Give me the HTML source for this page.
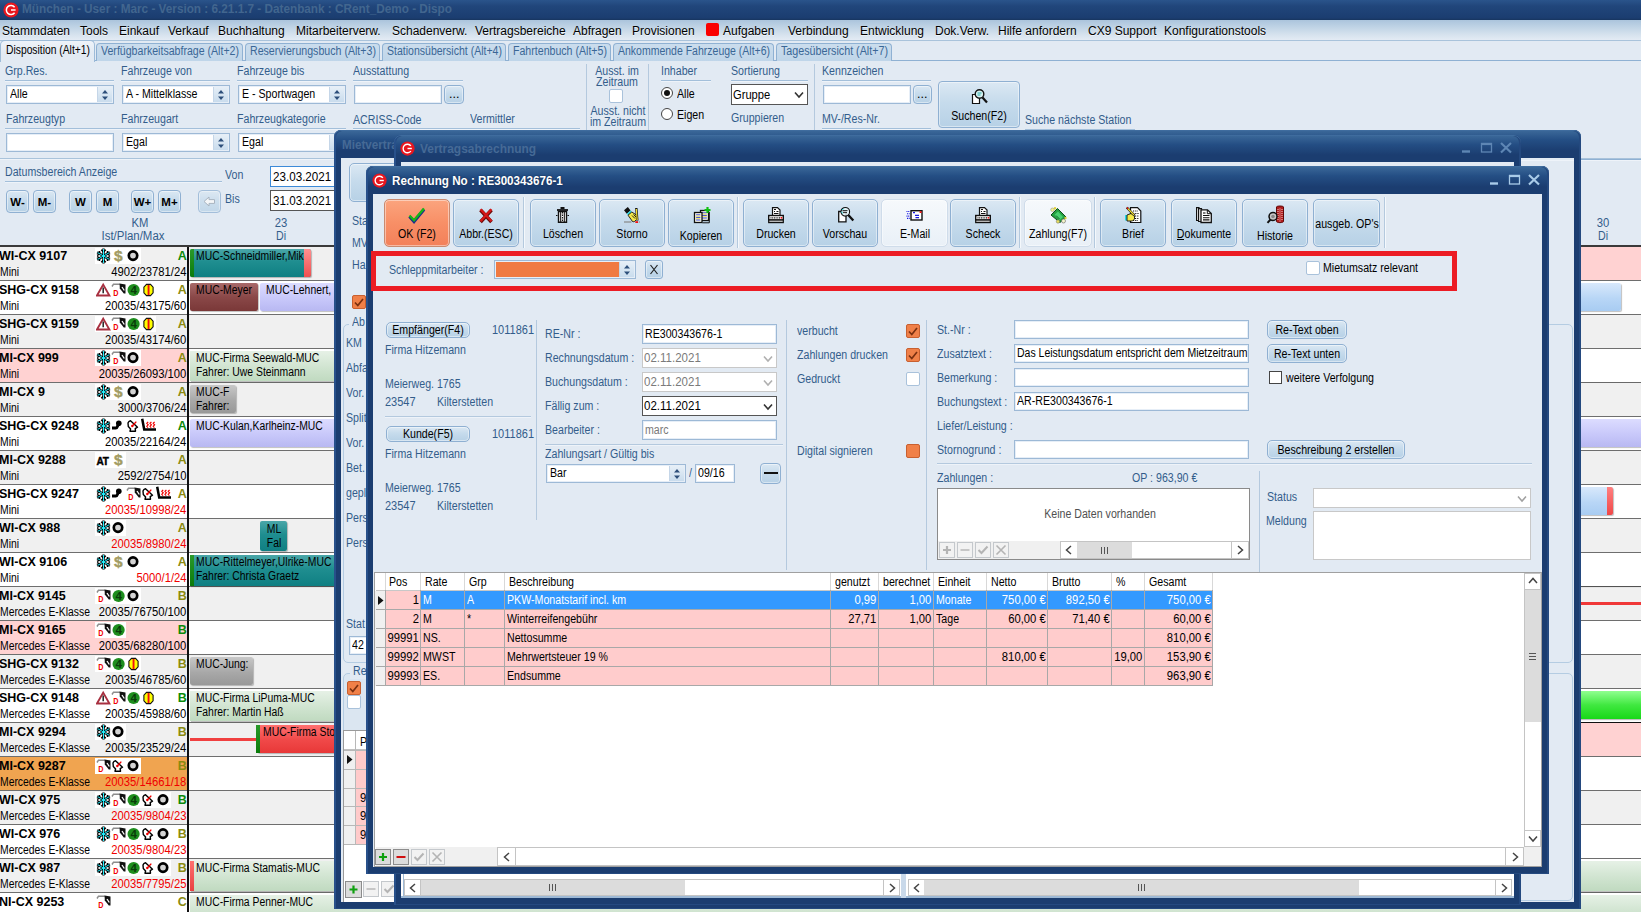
<!DOCTYPE html><html lang="de"><head><meta charset="utf-8"><title>CRent Dispo</title><style>
html,body{margin:0;padding:0}
body{width:1641px;height:912px;overflow:hidden;position:relative;background:#e2eaf3;font:12.5px/14px "Liberation Sans",sans-serif;color:#000}
.a{position:absolute;box-sizing:border-box}
.t{position:absolute;white-space:pre;transform-origin:0 50%;transform:scaleX(.85);line-height:14px;font-size:12.5px}
.t.r{transform-origin:100% 50%;text-align:right}
.t.c{transform-origin:50% 50%;text-align:center;width:300px}
.lb{color:#335d8b}
.b{font-weight:bold;transform:scaleX(1)}
.m{font-size:12px;transform:scaleX(1)}
.red{color:#f00000}
.gy{color:#7a7a7a}
.ln{position:absolute;height:1px;background:#a3bfda;box-shadow:0 1px 0 #eef3f9}
.vl{position:absolute;width:1px;background:#b4c9de}
.inp{position:absolute;box-sizing:border-box;background:#fff;border:1px solid #9db9d6;box-shadow:inset 0 0 0 1px #e6eef7}
.btn{position:absolute;box-sizing:border-box;border:1px solid #8fb0d2;border-radius:4px;background:linear-gradient(#dbe8f3,#c6dbec 45%,#b7d1e6);box-shadow:inset 0 0 0 1px rgba(255,255,255,.45)}
.sp{position:absolute;box-sizing:border-box;background:linear-gradient(#e6eff7,#c9dced);border-left:1px solid #c5d6e8}
.cb{position:absolute;box-sizing:border-box;width:14px;height:14px;background:#fff;border:1px solid #a9c2db;border-radius:2px}
.cbo{position:absolute;box-sizing:border-box;width:14px;height:14px;background:#f08048;border:1px solid #c86030;border-radius:2px}
svg{position:absolute;overflow:visible}
</style></head><body>
<svg width="0" height="0" style="left:0;top:0"><defs>
<symbol id="logo" viewBox="0 0 16 16"><circle cx="8" cy="8" r="7.6" fill="#e8161e"/><path d="M11.6 5.2A4.6 4.6 0 1 0 11.6 10.8" fill="none" stroke="#fff" stroke-width="1.5"/><path d="M8 8H12.6" stroke="#fff" stroke-width="1.5"/></symbol>
<symbol id="spin" viewBox="0 0 8 12"><path d="M1 4.5 4 1 7 4.5ZM1 7.5 4 11 7 7.5Z" fill="#2d4f7a"/></symbol>
<symbol id="snow" viewBox="0 0 15 16"><g stroke="#000" stroke-linecap="butt" fill="none"><path d="M7.500 0.500V15.500M1.200 4.300 13.800 11.700M1.200 11.700 13.800 4.300" stroke-width="2.400"/><path d="M5.200 1.800 7.500 4 9.800 1.800M5.200 14.200 7.500 12 9.800 14.200M1 7.400 3.900 6.100 3.400 3M14 8.600 11.100 9.900 11.600 13M1 8.600 3.900 9.900 3.400 13M14 7.400 11.100 6.100 11.600 3" stroke-width="1.500"/></g><g stroke="#20f0ff" stroke-width="1" fill="none"><path d="M7.500 1V15M1.600 4.600 13.400 11.400M1.600 11.400 13.400 4.600"/></g></symbol>
<symbol id="dollar" viewBox="0 0 15 16"><text x="7.300" y="13" text-anchor="middle" font-family="Liberation Sans" font-weight="bold" font-size="15.500" fill="#a39c62" stroke="#a39c62" stroke-width=".400">$</text></symbol>
<symbol id="tire" viewBox="0 0 15 16"><circle cx="7" cy="7.600" r="4.200" fill="#d4d4d4" stroke="#000" stroke-width="2.700"/></symbol>
<symbol id="warn" viewBox="0 0 15 16"><path d="M7.200 2.600 13.400 13.500H1Z" fill="#fff" stroke="#a83040" stroke-width="1.900" stroke-linejoin="miter"/><path d="M7.200 5.500V11.200" stroke="#222" stroke-width="1.500"/></symbol>
<symbol id="pump" viewBox="0 0 15 16"><path d="M1 4.500 2.500 2.200H9" fill="none" stroke="#8c8c8c" stroke-width="1.500"/><path d="M8.600 1.600 14.500 2.500V11.500H12.800L8.800 6.500Z" fill="#111"/><path d="M11 5 13.300 8.500" stroke="#fff" stroke-width="1.300"/><text x="2.200" y="14.300" font-family="Liberation Sans" font-weight="bold" font-size="8.500" fill="#f00000" transform="translate(.4 0) scale(.85 1)">D</text></symbol>
<symbol id="g4" viewBox="0 0 15 16"><circle cx="7.600" cy="8" r="6.100" fill="#1e8e1e"/><text x="7.600" y="12.200" text-anchor="middle" font-family="Liberation Sans" font-weight="bold" font-size="11.500" fill="#0a3c0a">4</text></symbol>
<symbol id="yr" viewBox="0 0 15 16"><path d="M5.500 2.400H9.500L12.100 5.200V10.800L9.500 13.600H5.500L2.900 10.800V5.200Z" fill="#ffff00" stroke="#111" stroke-width="1.100"/><rect x="6.600" y="2.900" width="1.900" height="10.200" fill="#f01010"/></symbol>
<symbol id="hook" viewBox="0 0 15 16"><path d="M1 10H4.800C6.800 10 6.300 7 7.800 6" fill="none" stroke="#000" stroke-width="3"/><circle cx="7.800" cy="5.300" r="2.800" fill="#000"/></symbol>
<symbol id="nav" viewBox="0 0 15 16"><path d="M2 5C2.500 3.500 3.500 3 4.500 2.800L11.500 9.200 9.200 10.600 9.500 13.200H4L4.600 11 2.300 8.500Z" fill="#fff" stroke="#000" stroke-width="1.400" stroke-linejoin="round"/><path d="M6.300 8 10.300 3.600" stroke="#f00000" stroke-width="1.400"/><circle cx="6.300" cy="8" r="1.200" fill="#f00000"/></symbol>
<symbol id="seat" viewBox="0 0 15 16"><path d="M1.200 0.800 3.200 11.400H15.200" fill="none" stroke="#000" stroke-width="2.500"/><path d="M7.200 3.800 5.800 5.300 7.200 6.800 5.800 8.300 7 9.700M10.400 3.800 9 5.300 10.400 6.800 9 8.300 10.200 9.700M13.600 3.800 12.200 5.300 13.600 6.800 12.200 8.300 13.400 9.700" fill="none" stroke="#f00000" stroke-width="1.200"/></symbol>
<symbol id="at" viewBox="0 0 15 16"><text x="6.700" y="13.300" text-anchor="middle" font-family="Liberation Sans" font-weight="bold" font-size="10" fill="#000" stroke="#000" stroke-width=".400">AT</text></symbol>
</defs></svg>
<div class="a" style="left:0px;top:0px;width:1641px;height:20px;background:linear-gradient(#2a548b,#21467b 30%,#1b3d70 90%,#17355f)"></div>
<svg style="left:2.5px;top:1.5px" width="16" height="16"><use href="#logo"/></svg>
<span class="t b" style="left:22px;top:2px;transform:scaleX(0.98);font-size:12px;color:#42668f">München - User : Marc - Version : 6.21.1.7 - Datenbank : CRent_Demo - Dispo</span>
<div class="a" style="left:0px;top:20px;width:1641px;height:21px;background:linear-gradient(#abc4dc,#bfd3e5 35%,#d4e1ed 70%,#e3ebf4);border-bottom:1px solid #a9c3db"></div>
<span class="t m" style="left:2px;top:23.5px;text-shadow:0 1px 0 rgba(255,255,255,.6)">Stammdaten</span>
<span class="t m" style="left:80px;top:23.5px;text-shadow:0 1px 0 rgba(255,255,255,.6)">Tools</span>
<span class="t m" style="left:119px;top:23.5px;text-shadow:0 1px 0 rgba(255,255,255,.6)">Einkauf</span>
<span class="t m" style="left:168px;top:23.5px;text-shadow:0 1px 0 rgba(255,255,255,.6)">Verkauf</span>
<span class="t m" style="left:218px;top:23.5px;text-shadow:0 1px 0 rgba(255,255,255,.6)">Buchhaltung</span>
<span class="t m" style="left:296px;top:23.5px;text-shadow:0 1px 0 rgba(255,255,255,.6)">Mitarbeiterverw.</span>
<span class="t m" style="left:392px;top:23.5px;text-shadow:0 1px 0 rgba(255,255,255,.6)">Schadenverw.</span>
<span class="t m" style="left:475px;top:23.5px;text-shadow:0 1px 0 rgba(255,255,255,.6)">Vertragsbereiche</span>
<span class="t m" style="left:573px;top:23.5px;text-shadow:0 1px 0 rgba(255,255,255,.6)">Abfragen</span>
<span class="t m" style="left:632px;top:23.5px;text-shadow:0 1px 0 rgba(255,255,255,.6)">Provisionen</span>
<span class="t m" style="left:723px;top:23.5px;text-shadow:0 1px 0 rgba(255,255,255,.6)">Aufgaben</span>
<span class="t m" style="left:788px;top:23.5px;text-shadow:0 1px 0 rgba(255,255,255,.6)">Verbindung</span>
<span class="t m" style="left:860px;top:23.5px;text-shadow:0 1px 0 rgba(255,255,255,.6)">Entwicklung</span>
<span class="t m" style="left:935px;top:23.5px;text-shadow:0 1px 0 rgba(255,255,255,.6)">Dok.Verw.</span>
<span class="t m" style="left:998px;top:23.5px;text-shadow:0 1px 0 rgba(255,255,255,.6)">Hilfe anfordern</span>
<span class="t m" style="left:1088px;top:23.5px;text-shadow:0 1px 0 rgba(255,255,255,.6)">CX9 Support</span>
<span class="t m" style="left:1164px;top:23.5px;text-shadow:0 1px 0 rgba(255,255,255,.6)">Konfigurationstools</span>
<div class="a" style="left:706px;top:23px;width:13px;height:13px;background:#fa0000;border-radius:2px"></div>
<div class="a" style="left:0px;top:41px;width:1641px;height:20px;background:#e2eaf3;border-bottom:1px solid #8fb1d3"></div>
<div class="a" style="left:96px;top:42.5px;width:147px;height:18.5px;background:linear-gradient(#cbdded,#bfd5e9);border:1px solid #8fb1d3;border-bottom:none;border-radius:4px 4px 0 0"></div>
<span class="t " style="left:101px;top:43.7px;transform:scaleX(0.847);color:#3a6796">Verfügbarkeitsabfrage (Alt+2)</span>
<div class="a" style="left:245px;top:42.5px;width:135px;height:18.5px;background:linear-gradient(#cbdded,#bfd5e9);border:1px solid #8fb1d3;border-bottom:none;border-radius:4px 4px 0 0"></div>
<span class="t " style="left:250px;top:43.7px;transform:scaleX(0.849);color:#3a6796">Reservierungsbuch (Alt+3)</span>
<div class="a" style="left:382px;top:42.5px;width:124px;height:18.5px;background:linear-gradient(#cbdded,#bfd5e9);border:1px solid #8fb1d3;border-bottom:none;border-radius:4px 4px 0 0"></div>
<span class="t " style="left:387px;top:43.7px;transform:scaleX(0.842);color:#3a6796">Stationsübersicht (Alt+4)</span>
<div class="a" style="left:508px;top:42.5px;width:103px;height:18.5px;background:linear-gradient(#cbdded,#bfd5e9);border:1px solid #8fb1d3;border-bottom:none;border-radius:4px 4px 0 0"></div>
<span class="t " style="left:513px;top:43.7px;transform:scaleX(0.848);color:#3a6796">Fahrtenbuch (Alt+5)</span>
<div class="a" style="left:613px;top:42.5px;width:161px;height:18.5px;background:linear-gradient(#cbdded,#bfd5e9);border:1px solid #8fb1d3;border-bottom:none;border-radius:4px 4px 0 0"></div>
<span class="t " style="left:618px;top:43.7px;transform:scaleX(0.84);color:#3a6796">Ankommende Fahrzeuge (Alt+6)</span>
<div class="a" style="left:776px;top:42.5px;width:116px;height:18.5px;background:linear-gradient(#cbdded,#bfd5e9);border:1px solid #8fb1d3;border-bottom:none;border-radius:4px 4px 0 0"></div>
<span class="t " style="left:781px;top:43.7px;transform:scaleX(0.858);color:#3a6796">Tagesübersicht (Alt+7)</span>
<div class="a" style="left:0px;top:40px;width:95px;height:22px;background:linear-gradient(#eef3f9,#e2eaf3 60%);border:1px solid #9dbbd8;border-bottom:none;border-radius:5px 5px 0 0"></div>
<span class="t " style="left:5.5px;top:42.5px;transform:scaleX(0.825);">Disposition (Alt+1)</span>
<span class="t lb" style="left:5px;top:64px;">Grp.Res.</span>
<div class="ln" style="left:5px;top:80px;width:109px;"></div>
<span class="t lb" style="left:121px;top:64px;">Fahrzeuge von</span>
<div class="ln" style="left:121px;top:80px;width:109px;"></div>
<span class="t lb" style="left:237px;top:64px;">Fahrzeuge bis</span>
<div class="ln" style="left:237px;top:80px;width:109px;"></div>
<span class="t lb" style="left:353px;top:64px;">Ausstattung</span>
<div class="ln" style="left:353px;top:80px;width:110px;"></div>
<div class="inp" style="left:6px;top:85px;width:108px;height:19px;"></div>
<div class="sp" style="left:97px;top:87px;width:15px;height:15px"></div>
<svg style="left:101px;top:88.5px" width="8" height="12"><use href="#spin"/></svg>
<span class="t " style="left:10px;top:86.9px;">Alle</span>
<div class="inp" style="left:122px;top:85px;width:108px;height:19px;"></div>
<div class="sp" style="left:213px;top:87px;width:15px;height:15px"></div>
<svg style="left:217px;top:88.5px" width="8" height="12"><use href="#spin"/></svg>
<span class="t " style="left:126px;top:86.9px;">A - Mittelklasse</span>
<div class="inp" style="left:238px;top:85px;width:108px;height:19px;"></div>
<div class="sp" style="left:329px;top:87px;width:15px;height:15px"></div>
<svg style="left:333px;top:88.5px" width="8" height="12"><use href="#spin"/></svg>
<span class="t " style="left:242px;top:86.9px;">E - Sportwagen</span>
<div class="inp" style="left:354px;top:85px;width:88px;height:19px;"></div>
<div class="btn" style="left:444px;top:85px;width:20px;height:19px;"></div>
<span class="t " style="left:449px;top:87px;transform:scaleX(1);">...</span>
<span class="t lb" style="left:6px;top:112px;">Fahrzeugtyp</span>
<span class="t lb" style="left:121px;top:112px;">Fahrzeugart</span>
<span class="t lb" style="left:237px;top:112px;">Fahrzeugkategorie</span>
<span class="t lb" style="left:353px;top:113px;">ACRISS-Code</span>
<span class="t lb" style="left:470px;top:112px;">Vermittler</span>
<div class="ln" style="left:5px;top:128px;width:341px;"></div>
<div class="ln" style="left:353px;top:128px;width:227px;"></div>
<div class="inp" style="left:6px;top:133px;width:108px;height:19px;"></div>
<div class="inp" style="left:122px;top:133px;width:108px;height:19px;"></div>
<div class="sp" style="left:213px;top:135px;width:15px;height:15px"></div>
<svg style="left:217px;top:136.5px" width="8" height="12"><use href="#spin"/></svg>
<span class="t " style="left:126px;top:134.9px;">Egal</span>
<div class="inp" style="left:238px;top:133px;width:108px;height:19px;"></div>
<div class="sp" style="left:329px;top:135px;width:15px;height:15px"></div>
<svg style="left:333px;top:136.5px" width="8" height="12"><use href="#spin"/></svg>
<span class="t " style="left:242px;top:134.9px;">Egal</span>
<div class="vl" style="left:586px;top:64px;height:66px;"></div>
<div class="vl" style="left:648px;top:64px;height:66px;"></div>
<div class="vl" style="left:814px;top:64px;height:66px;"></div>
<span class="t c lb" style="left:467px;top:64px;">Ausst. im</span>
<span class="t c lb" style="left:467px;top:75px;">Zeitraum</span>
<div class="cb" style="left:609px;top:89px"></div>
<span class="t c lb" style="left:468px;top:104px;">Ausst. nicht</span>
<span class="t c lb" style="left:468px;top:115px;">im Zeitraum</span>
<span class="t lb" style="left:661px;top:64px;">Inhaber</span>
<div class="ln" style="left:661px;top:80px;width:50px;"></div>
<div class="a" style="left:661px;top:87px;width:12px;height:12px;border-radius:50%;border:1px solid #444;background:#fff"></div><div class="a" style="left:664px;top:90px;width:6px;height:6px;border-radius:50%;background:#111"></div>
<span class="t " style="left:677px;top:86.5px;">Alle</span>
<div class="a" style="left:661px;top:108px;width:12px;height:12px;border-radius:50%;border:1px solid #444;background:#fff"></div>
<span class="t " style="left:677px;top:107.5px;">Eigen</span>
<span class="t lb" style="left:731px;top:64px;">Sortierung</span>
<div class="ln" style="left:731px;top:80px;width:77px;"></div>
<div class="a" style="left:731px;top:84px;width:77px;height:21px;background:#fff;border:1px solid #555"></div>
<span class="t m" style="left:733px;top:87.5px;transform:scaleX(0.93);">Gruppe</span>
<svg style="left:794px;top:91px" width="10" height="8"><path d="M1 1.5 5 6 9 1.5" fill="none" stroke="#333" stroke-width="1.6"/></svg>
<span class="t lb" style="left:731px;top:111px;">Gruppieren</span>
<span class="t lb" style="left:822px;top:64px;">Kennzeichen</span>
<div class="ln" style="left:822px;top:80px;width:109px;"></div>
<div class="inp" style="left:823px;top:85px;width:88px;height:19px;"></div>
<div class="btn" style="left:913px;top:85px;width:19px;height:19px;"></div>
<span class="t " style="left:917px;top:87px;transform:scaleX(1);">...</span>
<span class="t lb" style="left:822px;top:112px;">MV-/Res-Nr.</span>
<div class="ln" style="left:822px;top:128px;width:109px;"></div>
<div class="btn" style="left:938px;top:81px;width:82px;height:47px;"></div>
<svg style="left:971px;top:88px" width="18" height="17" viewBox="0 0 18 17"><path d="M1.5 6.5H8.5V15.5H1.5Z" fill="#fff" stroke="#111" stroke-width="1.2"/><circle cx="8.5" cy="6" r="4.3" fill="#d8f0f0" stroke="#111" stroke-width="1.4"/><path d="M6.5 5H10.5M6.5 7H9.5" stroke="#2aa" stroke-width="1"/><path d="M11.5 9.5 16 14.5" stroke="#111" stroke-width="2.2"/></svg>
<span class="t c " style="left:829px;top:108.5px;">Suchen(F2)</span>
<span class="t lb" style="left:1025px;top:113px;">Suche nächste Station</span>
<div class="ln" style="left:1025px;top:129px;width:110px;"></div>
<div class="ln" style="left:0px;top:158px;width:1641px;background:#a9c3db"></div>
<span class="t lb" style="left:5px;top:165px;">Datumsbereich Anzeige</span>
<div class="ln" style="left:5px;top:181px;width:217px;"></div>
<span class="t lb" style="left:225px;top:168px;">Von</span>
<span class="t lb" style="left:225px;top:192px;">Bis</span>
<div class="a" style="left:270px;top:166px;width:70px;height:21px;background:#fff;border:1px solid #3c8ad8"></div>
<span class="t m" style="left:273px;top:169.5px;transform:scaleX(0.97);">23.03.2021</span>
<div class="a" style="left:270px;top:190px;width:70px;height:21px;background:#fff;border:1px solid #555"></div>
<span class="t m" style="left:273px;top:193.5px;transform:scaleX(0.97);">31.03.2021</span>
<div class="btn" style="left:6px;top:190px;width:23px;height:23px;"></div>
<span class="t c b" style="left:-132.5px;top:194.5px;font-size:11.5px">W-</span>
<div class="btn" style="left:33px;top:190px;width:23px;height:23px;"></div>
<span class="t c b" style="left:-105.5px;top:194.5px;font-size:11.5px">M-</span>
<div class="btn" style="left:69px;top:190px;width:23px;height:23px;"></div>
<span class="t c b" style="left:-69.5px;top:194.5px;font-size:11.5px">W</span>
<div class="btn" style="left:96px;top:190px;width:23px;height:23px;"></div>
<span class="t c b" style="left:-42.5px;top:194.5px;font-size:11.5px">M</span>
<div class="btn" style="left:131px;top:190px;width:23px;height:23px;"></div>
<span class="t c b" style="left:-7.5px;top:194.5px;font-size:11.5px">W+</span>
<div class="btn" style="left:158px;top:190px;width:23px;height:23px;"></div>
<span class="t c b" style="left:19.5px;top:194.5px;font-size:11.5px">M+</span>
<div class="btn" style="left:198px;top:190px;width:23px;height:23px;opacity:.75"></div>
<svg style="left:203px;top:196px" width="13" height="11" viewBox="0 0 13 11"><path d="M1 5.5 6 1V3.6H11.5V7.4H6V10Z" fill="#f4f6f8" stroke="#a8b4c0" stroke-width="1"/></svg>
<span class="t c lb" style="left:-10.5px;top:216.3px;transform:scaleX(0.9);">KM</span>
<span class="t c lb" style="left:-17.5px;top:229.2px;transform:scaleX(0.916);">Ist/Plan/Max</span>
<span class="t c lb" style="left:131px;top:216.3px;transform:scaleX(0.9);">23</span>
<span class="t c lb" style="left:131px;top:229.2px;">Di</span>
<span class="t c lb" style="left:1453px;top:216.3px;transform:scaleX(0.9);">30</span>
<span class="t c lb" style="left:1453px;top:229.2px;">Di</span>
<div class="ln" style="left:1581px;top:159px;width:60px;background:#8fb1d3"></div>
<div class="a" style="left:0px;top:245px;width:1641px;height:2px;background:#3a3a3a"></div>
<div class="a" style="left:0px;top:247px;width:187px;height:33px;background:#f0f0f0"></div>
<div class="a" style="left:189px;top:247px;width:1452px;height:33px;background:#f0f0f0"></div>
<div class="a" style="left:0px;top:280px;width:1641px;height:1px;background:#6e6e6e"></div>
<span class="t b" style="left:-1px;top:248.5px;">WI-CX 9107</span>
<span class="t " style="left:0px;top:265px;transform:scaleX(0.83);">Mini</span>
<div class="a" style="left:95px;top:248px;width:46px;height:16px;background:#fff"></div>
<svg style="left:95.5px;top:248px" width="15" height="16"><use href="#snow"/></svg>
<svg style="left:110.5px;top:248px" width="15" height="16"><use href="#dollar"/></svg>
<svg style="left:125.5px;top:248px" width="15" height="16"><use href="#tire"/></svg>
<span class="t r b r" style="right:1454.3px;top:248.5px;color:#0a8a0a">A</span>
<span class="t r r" style="right:1454.7px;top:265px;transform:scaleX(0.9);">4902/23781/24</span>
<div class="a" style="left:0px;top:281px;width:187px;height:33px;background:#fff"></div>
<div class="a" style="left:189px;top:281px;width:1452px;height:33px;background:#fff"></div>
<div class="a" style="left:0px;top:314px;width:1641px;height:1px;background:#6e6e6e"></div>
<span class="t b" style="left:-1px;top:282.5px;">SHG-CX 9158</span>
<span class="t " style="left:0px;top:299px;transform:scaleX(0.83);">Mini</span>
<div class="a" style="left:95px;top:282px;width:61px;height:16px;background:#fff"></div>
<svg style="left:95.5px;top:282px" width="15" height="16"><use href="#warn"/></svg>
<svg style="left:110.5px;top:282px" width="15" height="16"><use href="#pump"/></svg>
<svg style="left:125.5px;top:282px" width="15" height="16"><use href="#g4"/></svg>
<svg style="left:140.5px;top:282px" width="15" height="16"><use href="#yr"/></svg>
<span class="t r b r" style="right:1454.3px;top:282.5px;color:#8a8a10">A</span>
<span class="t r r" style="right:1454.7px;top:299px;transform:scaleX(0.9);">20035/43175/60</span>
<div class="a" style="left:0px;top:315px;width:187px;height:33px;background:#f0f0f0"></div>
<div class="a" style="left:189px;top:315px;width:1452px;height:33px;background:#f0f0f0"></div>
<div class="a" style="left:0px;top:348px;width:1641px;height:1px;background:#6e6e6e"></div>
<span class="t b" style="left:-1px;top:316.5px;">SHG-CX 9159</span>
<span class="t " style="left:0px;top:333px;transform:scaleX(0.83);">Mini</span>
<div class="a" style="left:95px;top:316px;width:61px;height:16px;background:#fff"></div>
<svg style="left:95.5px;top:316px" width="15" height="16"><use href="#warn"/></svg>
<svg style="left:110.5px;top:316px" width="15" height="16"><use href="#pump"/></svg>
<svg style="left:125.5px;top:316px" width="15" height="16"><use href="#g4"/></svg>
<svg style="left:140.5px;top:316px" width="15" height="16"><use href="#yr"/></svg>
<span class="t r b r" style="right:1454.3px;top:316.5px;color:#8a8a10">A</span>
<span class="t r r" style="right:1454.7px;top:333px;transform:scaleX(0.9);">20035/43174/60</span>
<div class="a" style="left:0px;top:349px;width:187px;height:33px;background:#ffd2d2"></div>
<div class="a" style="left:189px;top:349px;width:1452px;height:33px;background:#fff"></div>
<div class="a" style="left:0px;top:382px;width:1641px;height:1px;background:#6e6e6e"></div>
<span class="t b" style="left:-1px;top:350.5px;">MI-CX 999</span>
<span class="t " style="left:0px;top:367px;transform:scaleX(0.83);">Mini</span>
<div class="a" style="left:95px;top:350px;width:46px;height:16px;background:#fff"></div>
<svg style="left:95.5px;top:350px" width="15" height="16"><use href="#snow"/></svg>
<svg style="left:110.5px;top:350px" width="15" height="16"><use href="#pump"/></svg>
<svg style="left:125.5px;top:350px" width="15" height="16"><use href="#tire"/></svg>
<span class="t r b r" style="right:1454.3px;top:350.5px;color:#8a8a10">A</span>
<span class="t r r" style="right:1454.7px;top:367px;transform:scaleX(0.9);">20035/26093/100</span>
<div class="a" style="left:0px;top:383px;width:187px;height:33px;background:#f0f0f0"></div>
<div class="a" style="left:189px;top:383px;width:1452px;height:33px;background:#f0f0f0"></div>
<div class="a" style="left:0px;top:416px;width:1641px;height:1px;background:#6e6e6e"></div>
<span class="t b" style="left:-1px;top:384.5px;">MI-CX 9</span>
<span class="t " style="left:0px;top:401px;transform:scaleX(0.83);">Mini</span>
<div class="a" style="left:95px;top:384px;width:46px;height:16px;background:#fff"></div>
<svg style="left:95.5px;top:384px" width="15" height="16"><use href="#snow"/></svg>
<svg style="left:110.5px;top:384px" width="15" height="16"><use href="#dollar"/></svg>
<svg style="left:125.5px;top:384px" width="15" height="16"><use href="#tire"/></svg>
<span class="t r b r" style="right:1454.3px;top:384.5px;color:#8a8a10">A</span>
<span class="t r r" style="right:1454.7px;top:401px;transform:scaleX(0.9);">3000/3706/24</span>
<div class="a" style="left:0px;top:417px;width:187px;height:33px;background:#fff"></div>
<div class="a" style="left:189px;top:417px;width:1452px;height:33px;background:#fff"></div>
<div class="a" style="left:0px;top:450px;width:1641px;height:1px;background:#6e6e6e"></div>
<span class="t b" style="left:-1px;top:418.5px;">SHG-CX 9248</span>
<span class="t " style="left:0px;top:435px;transform:scaleX(0.83);">Mini</span>
<div class="a" style="left:95px;top:418px;width:61px;height:16px;background:#fff"></div>
<svg style="left:95.5px;top:418px" width="15" height="16"><use href="#snow"/></svg>
<svg style="left:110.5px;top:418px" width="15" height="16"><use href="#hook"/></svg>
<svg style="left:125.5px;top:418px" width="15" height="16"><use href="#nav"/></svg>
<svg style="left:140.5px;top:418px" width="15" height="16"><use href="#seat"/></svg>
<span class="t r b r" style="right:1454.3px;top:418.5px;color:#0a8a0a">A</span>
<span class="t r r" style="right:1454.7px;top:435px;transform:scaleX(0.9);">20035/22164/24</span>
<div class="a" style="left:0px;top:451px;width:187px;height:33px;background:#f0f0f0"></div>
<div class="a" style="left:189px;top:451px;width:1452px;height:33px;background:#f0f0f0"></div>
<div class="a" style="left:0px;top:484px;width:1641px;height:1px;background:#6e6e6e"></div>
<span class="t b" style="left:-1px;top:452.5px;">MI-CX 9288</span>
<span class="t " style="left:0px;top:469px;transform:scaleX(0.83);">Mini</span>
<div class="a" style="left:95px;top:452px;width:31px;height:16px;background:#fff"></div>
<svg style="left:95.5px;top:452px" width="15" height="16"><use href="#at"/></svg>
<svg style="left:110.5px;top:452px" width="15" height="16"><use href="#dollar"/></svg>
<span class="t r b r" style="right:1454.3px;top:452.5px;color:#8a8a10">A</span>
<span class="t r r" style="right:1454.7px;top:469px;transform:scaleX(0.9);">2592/2754/10</span>
<div class="a" style="left:0px;top:485px;width:187px;height:33px;background:#fff"></div>
<div class="a" style="left:189px;top:485px;width:1452px;height:33px;background:#fff"></div>
<div class="a" style="left:0px;top:518px;width:1641px;height:1px;background:#6e6e6e"></div>
<span class="t b" style="left:-1px;top:486.5px;">SHG-CX 9247</span>
<span class="t " style="left:0px;top:503px;transform:scaleX(0.83);">Mini</span>
<div class="a" style="left:95px;top:486px;width:76px;height:16px;background:#fff"></div>
<svg style="left:95.5px;top:486px" width="15" height="16"><use href="#snow"/></svg>
<svg style="left:110.5px;top:486px" width="15" height="16"><use href="#hook"/></svg>
<svg style="left:125.5px;top:486px" width="15" height="16"><use href="#pump"/></svg>
<svg style="left:140.5px;top:486px" width="15" height="16"><use href="#nav"/></svg>
<svg style="left:155.5px;top:486px" width="15" height="16"><use href="#seat"/></svg>
<span class="t r b r" style="right:1454.3px;top:486.5px;color:#8a8a10">A</span>
<span class="t r r red" style="right:1454.7px;top:503px;transform:scaleX(0.9);">20035/10998/24</span>
<div class="a" style="left:0px;top:519px;width:187px;height:33px;background:#f0f0f0"></div>
<div class="a" style="left:189px;top:519px;width:1452px;height:33px;background:#f0f0f0"></div>
<div class="a" style="left:0px;top:552px;width:1641px;height:1px;background:#6e6e6e"></div>
<span class="t b" style="left:-1px;top:520.5px;">WI-CX 988</span>
<span class="t " style="left:0px;top:537px;transform:scaleX(0.83);">Mini</span>
<div class="a" style="left:95px;top:520px;width:31px;height:16px;background:#fff"></div>
<svg style="left:95.5px;top:520px" width="15" height="16"><use href="#snow"/></svg>
<svg style="left:110.5px;top:520px" width="15" height="16"><use href="#tire"/></svg>
<span class="t r b r" style="right:1454.3px;top:520.5px;color:#8a8a10">A</span>
<span class="t r r red" style="right:1454.7px;top:537px;transform:scaleX(0.9);">20035/8980/24</span>
<div class="a" style="left:0px;top:553px;width:187px;height:33px;background:#fff"></div>
<div class="a" style="left:189px;top:553px;width:1452px;height:33px;background:#fff"></div>
<div class="a" style="left:0px;top:586px;width:1641px;height:1px;background:#6e6e6e"></div>
<span class="t b" style="left:-1px;top:554.5px;">WI-CX 9106</span>
<span class="t " style="left:0px;top:571px;transform:scaleX(0.83);">Mini</span>
<div class="a" style="left:95px;top:554px;width:46px;height:16px;background:#fff"></div>
<svg style="left:95.5px;top:554px" width="15" height="16"><use href="#snow"/></svg>
<svg style="left:110.5px;top:554px" width="15" height="16"><use href="#dollar"/></svg>
<svg style="left:125.5px;top:554px" width="15" height="16"><use href="#tire"/></svg>
<span class="t r b r" style="right:1454.3px;top:554.5px;color:#8a8a10">A</span>
<span class="t r r red" style="right:1454.7px;top:571px;transform:scaleX(0.9);">5000/1/24</span>
<div class="a" style="left:0px;top:587px;width:187px;height:33px;background:#f0f0f0"></div>
<div class="a" style="left:189px;top:587px;width:1452px;height:33px;background:#f0f0f0"></div>
<div class="a" style="left:0px;top:620px;width:1641px;height:1px;background:#6e6e6e"></div>
<span class="t b" style="left:-1px;top:588.5px;">MI-CX 9145</span>
<span class="t " style="left:0px;top:605px;transform:scaleX(0.83);">Mercedes E-Klasse</span>
<div class="a" style="left:95px;top:588px;width:46px;height:16px;background:#fff"></div>
<svg style="left:95.5px;top:588px" width="15" height="16"><use href="#pump"/></svg>
<svg style="left:110.5px;top:588px" width="15" height="16"><use href="#g4"/></svg>
<svg style="left:125.5px;top:588px" width="15" height="16"><use href="#tire"/></svg>
<span class="t r b r" style="right:1454.3px;top:588.5px;color:#8a8a10">B</span>
<span class="t r r" style="right:1454.7px;top:605px;transform:scaleX(0.9);">20035/76750/100</span>
<div class="a" style="left:0px;top:621px;width:187px;height:33px;background:#ffd2d2"></div>
<div class="a" style="left:189px;top:621px;width:1452px;height:33px;background:#fff"></div>
<div class="a" style="left:0px;top:654px;width:1641px;height:1px;background:#6e6e6e"></div>
<span class="t b" style="left:-1px;top:622.5px;">MI-CX 9165</span>
<span class="t " style="left:0px;top:639px;transform:scaleX(0.83);">Mercedes E-Klasse</span>
<div class="a" style="left:95px;top:622px;width:31px;height:16px;background:#fff"></div>
<svg style="left:95.5px;top:622px" width="15" height="16"><use href="#pump"/></svg>
<svg style="left:110.5px;top:622px" width="15" height="16"><use href="#g4"/></svg>
<span class="t r b r" style="right:1454.3px;top:622.5px;color:#0a8a0a">B</span>
<span class="t r r" style="right:1454.7px;top:639px;transform:scaleX(0.9);">20035/68280/100</span>
<div class="a" style="left:0px;top:655px;width:187px;height:33px;background:#f0f0f0"></div>
<div class="a" style="left:189px;top:655px;width:1452px;height:33px;background:#f0f0f0"></div>
<div class="a" style="left:0px;top:688px;width:1641px;height:1px;background:#6e6e6e"></div>
<span class="t b" style="left:-1px;top:656.5px;">SHG-CX 9132</span>
<span class="t " style="left:0px;top:673px;transform:scaleX(0.83);">Mercedes E-Klasse</span>
<div class="a" style="left:95px;top:656px;width:46px;height:16px;background:#fff"></div>
<svg style="left:95.5px;top:656px" width="15" height="16"><use href="#pump"/></svg>
<svg style="left:110.5px;top:656px" width="15" height="16"><use href="#g4"/></svg>
<svg style="left:125.5px;top:656px" width="15" height="16"><use href="#yr"/></svg>
<span class="t r b r" style="right:1454.3px;top:656.5px;color:#8a8a10">B</span>
<span class="t r r" style="right:1454.7px;top:673px;transform:scaleX(0.9);">20035/46785/60</span>
<div class="a" style="left:0px;top:689px;width:187px;height:33px;background:#fff"></div>
<div class="a" style="left:189px;top:689px;width:1452px;height:33px;background:#fff"></div>
<div class="a" style="left:0px;top:722px;width:1641px;height:1px;background:#6e6e6e"></div>
<span class="t b" style="left:-1px;top:690.5px;">SHG-CX 9148</span>
<span class="t " style="left:0px;top:707px;transform:scaleX(0.83);">Mercedes E-Klasse</span>
<div class="a" style="left:95px;top:690px;width:61px;height:16px;background:#fff"></div>
<svg style="left:95.5px;top:690px" width="15" height="16"><use href="#warn"/></svg>
<svg style="left:110.5px;top:690px" width="15" height="16"><use href="#pump"/></svg>
<svg style="left:125.5px;top:690px" width="15" height="16"><use href="#g4"/></svg>
<svg style="left:140.5px;top:690px" width="15" height="16"><use href="#yr"/></svg>
<span class="t r b r" style="right:1454.3px;top:690.5px;color:#0a8a0a">B</span>
<span class="t r r" style="right:1454.7px;top:707px;transform:scaleX(0.9);">20035/45988/60</span>
<div class="a" style="left:0px;top:723px;width:187px;height:33px;background:#f0f0f0"></div>
<div class="a" style="left:189px;top:723px;width:1452px;height:33px;background:#f0f0f0"></div>
<div class="a" style="left:0px;top:756px;width:1641px;height:1px;background:#6e6e6e"></div>
<span class="t b" style="left:-1px;top:724.5px;">MI-CX 9294</span>
<span class="t " style="left:0px;top:741px;transform:scaleX(0.83);">Mercedes E-Klasse</span>
<div class="a" style="left:95px;top:724px;width:31px;height:16px;background:#fff"></div>
<svg style="left:95.5px;top:724px" width="15" height="16"><use href="#snow"/></svg>
<svg style="left:110.5px;top:724px" width="15" height="16"><use href="#tire"/></svg>
<span class="t r b r" style="right:1454.3px;top:724.5px;color:#8a8a10">B</span>
<span class="t r r" style="right:1454.7px;top:741px;transform:scaleX(0.9);">20035/23529/24</span>
<div class="a" style="left:0px;top:757px;width:187px;height:33px;background:#f0a450"></div>
<div class="a" style="left:189px;top:757px;width:1452px;height:33px;background:#fff"></div>
<div class="a" style="left:0px;top:790px;width:1641px;height:1px;background:#6e6e6e"></div>
<span class="t b" style="left:-1px;top:758.5px;">MI-CX 9287</span>
<span class="t " style="left:0px;top:775px;transform:scaleX(0.83);">Mercedes E-Klasse</span>
<div class="a" style="left:95px;top:758px;width:46px;height:16px;background:#fff"></div>
<svg style="left:95.5px;top:758px" width="15" height="16"><use href="#pump"/></svg>
<svg style="left:110.5px;top:758px" width="15" height="16"><use href="#nav"/></svg>
<svg style="left:125.5px;top:758px" width="15" height="16"><use href="#tire"/></svg>
<span class="t r b r" style="right:1454.3px;top:758.5px;color:#8a8a10">B</span>
<span class="t r r red" style="right:1454.7px;top:775px;transform:scaleX(0.9);">20035/14661/18</span>
<div class="a" style="left:0px;top:791px;width:187px;height:33px;background:#f0f0f0"></div>
<div class="a" style="left:189px;top:791px;width:1452px;height:33px;background:#f0f0f0"></div>
<div class="a" style="left:0px;top:824px;width:1641px;height:1px;background:#6e6e6e"></div>
<span class="t b" style="left:-1px;top:792.5px;">WI-CX 975</span>
<span class="t " style="left:0px;top:809px;transform:scaleX(0.83);">Mercedes E-Klasse</span>
<div class="a" style="left:95px;top:792px;width:76px;height:16px;background:#fff"></div>
<svg style="left:95.5px;top:792px" width="15" height="16"><use href="#snow"/></svg>
<svg style="left:110.5px;top:792px" width="15" height="16"><use href="#pump"/></svg>
<svg style="left:125.5px;top:792px" width="15" height="16"><use href="#g4"/></svg>
<svg style="left:140.5px;top:792px" width="15" height="16"><use href="#nav"/></svg>
<svg style="left:155.5px;top:792px" width="15" height="16"><use href="#tire"/></svg>
<span class="t r b r" style="right:1454.3px;top:792.5px;color:#0a8a0a">B</span>
<span class="t r r red" style="right:1454.7px;top:809px;transform:scaleX(0.9);">20035/9804/23</span>
<div class="a" style="left:0px;top:825px;width:187px;height:33px;background:#fff"></div>
<div class="a" style="left:189px;top:825px;width:1452px;height:33px;background:#fff"></div>
<div class="a" style="left:0px;top:858px;width:1641px;height:1px;background:#6e6e6e"></div>
<span class="t b" style="left:-1px;top:826.5px;">WI-CX 976</span>
<span class="t " style="left:0px;top:843px;transform:scaleX(0.83);">Mercedes E-Klasse</span>
<div class="a" style="left:95px;top:826px;width:76px;height:16px;background:#fff"></div>
<svg style="left:95.5px;top:826px" width="15" height="16"><use href="#snow"/></svg>
<svg style="left:110.5px;top:826px" width="15" height="16"><use href="#pump"/></svg>
<svg style="left:125.5px;top:826px" width="15" height="16"><use href="#g4"/></svg>
<svg style="left:140.5px;top:826px" width="15" height="16"><use href="#nav"/></svg>
<svg style="left:155.5px;top:826px" width="15" height="16"><use href="#tire"/></svg>
<span class="t r b r" style="right:1454.3px;top:826.5px;color:#8a8a10">B</span>
<span class="t r r red" style="right:1454.7px;top:843px;transform:scaleX(0.9);">20035/9804/23</span>
<div class="a" style="left:0px;top:859px;width:187px;height:33px;background:#f0f0f0"></div>
<div class="a" style="left:189px;top:859px;width:1452px;height:33px;background:#f0f0f0"></div>
<div class="a" style="left:0px;top:892px;width:1641px;height:1px;background:#6e6e6e"></div>
<span class="t b" style="left:-1px;top:860.5px;">WI-CX 987</span>
<span class="t " style="left:0px;top:877px;transform:scaleX(0.83);">Mercedes E-Klasse</span>
<div class="a" style="left:95px;top:860px;width:76px;height:16px;background:#fff"></div>
<svg style="left:95.5px;top:860px" width="15" height="16"><use href="#snow"/></svg>
<svg style="left:110.5px;top:860px" width="15" height="16"><use href="#pump"/></svg>
<svg style="left:125.5px;top:860px" width="15" height="16"><use href="#g4"/></svg>
<svg style="left:140.5px;top:860px" width="15" height="16"><use href="#nav"/></svg>
<svg style="left:155.5px;top:860px" width="15" height="16"><use href="#tire"/></svg>
<span class="t r b r" style="right:1454.3px;top:860.5px;color:#8a8a10">B</span>
<span class="t r r red" style="right:1454.7px;top:877px;transform:scaleX(0.9);">20035/7795/25</span>
<div class="a" style="left:0px;top:893px;width:187px;height:33px;background:#fff"></div>
<div class="a" style="left:189px;top:893px;width:1452px;height:33px;background:#fff"></div>
<div class="a" style="left:0px;top:926px;width:1641px;height:1px;background:#6e6e6e"></div>
<span class="t b" style="left:-1px;top:894.5px;">NI-CX 9253</span>
<div class="a" style="left:95px;top:894px;width:16px;height:16px;background:#fff"></div>
<svg style="left:95.5px;top:894px" width="15" height="16"><use href="#pump"/></svg>
<span class="t r b r" style="right:1454.3px;top:894.5px;color:#8a8a10">C</span>
<div class="a" style="left:187px;top:247px;width:2px;height:665px;background:#111"></div>
<div class="a" style="left:190px;top:249px;width:121px;height:28px;background:linear-gradient(#4aa6a8,#1f8e90 45%,#0f7f82);border-radius:2px;box-shadow:1px 1px 1px rgba(0,0,0,.25);"></div>
<span class="t " style="left:195.5px;top:248.5px;transform:scaleX(0.83);">MUC-Schneidmiller,Mik</span>
<div class="a" style="left:190px;top:249px;width:4px;height:28px;background:linear-gradient(#2a9a2a,#0a7a0a);border-radius:2px 0 0 2px"></div>
<div class="a" style="left:304px;top:249px;width:7px;height:28px;background:linear-gradient(#ff9090,#f05050);border-radius:0 2px 2px 0"></div>
<div class="a" style="left:190px;top:283px;width:68px;height:28px;background:linear-gradient(#a86a6a,#8a4848 50%,#7a3838);border-radius:2px;box-shadow:1px 1px 1px rgba(0,0,0,.25);"></div>
<span class="t " style="left:195.5px;top:282.5px;transform:scaleX(0.83);">MUC-Meyer</span>
<div class="a" style="left:260px;top:283px;width:1361px;height:28px;background:linear-gradient(#dcdcff,#c8c8fa 55%,#b8b8f2);border-radius:2px;box-shadow:1px 1px 1px rgba(0,0,0,.25);"></div>
<span class="t " style="left:265.5px;top:282.5px;transform:scaleX(0.83);">MUC-Lehnert,</span>
<div class="a" style="left:190px;top:351px;width:1500px;height:30px;background:linear-gradient(#e6f1e6,#d0e4d0 55%,#c0dac0);border-radius:2px;box-shadow:1px 1px 1px rgba(0,0,0,.25);border-radius:0"></div>
<span class="t " style="left:195.5px;top:350.5px;transform:scaleX(0.83);">MUC-Firma Seewald-MUC</span>
<span class="t " style="left:195.5px;top:364.5px;transform:scaleX(0.83);">Fahrer: Uwe Steinmann</span>
<div class="a" style="left:190px;top:385px;width:46px;height:28px;background:linear-gradient(#c8c8c8,#a8a8a8 55%,#989898);border-radius:2px;box-shadow:1px 1px 1px rgba(0,0,0,.25);"></div>
<span class="t " style="left:195.5px;top:384.5px;transform:scaleX(0.83);">MUC-F</span>
<span class="t " style="left:195.5px;top:398.5px;transform:scaleX(0.83);">Fahrer:</span>
<div class="a" style="left:190px;top:419px;width:1500px;height:28px;background:linear-gradient(#dcdcff,#c8c8fa 55%,#b8b8f2);border-radius:2px;box-shadow:1px 1px 1px rgba(0,0,0,.25);"></div>
<span class="t " style="left:195.5px;top:418.5px;transform:scaleX(0.83);">MUC-Kulan,Karlheinz-MUC</span>
<div class="a" style="left:260px;top:521px;width:27px;height:30px;background:linear-gradient(#4aa6a8,#1f8e90 45%,#0f7f82);border-radius:2px;box-shadow:1px 1px 1px rgba(0,0,0,.25);"></div>
<span class="t c " style="left:123.5px;top:522px;transform:scaleX(0.83);">ML</span>
<span class="t c " style="left:123.5px;top:536px;transform:scaleX(0.83);">Fal</span>
<div class="a" style="left:190px;top:555px;width:1500px;height:31px;background:linear-gradient(#4aa6a8,#1f8e90 45%,#0f7f82);border-radius:2px;box-shadow:1px 1px 1px rgba(0,0,0,.25);border-radius:0"></div>
<span class="t " style="left:195.5px;top:554.5px;transform:scaleX(0.83);">MUC-Rittelmeyer,Ulrike-MUC</span>
<span class="t " style="left:195.5px;top:568.5px;transform:scaleX(0.83);">Fahrer: Christa Graetz</span>
<div class="a" style="left:190px;top:555px;width:4px;height:31px;background:linear-gradient(#2a9a2a,#0a7a0a)"></div>
<div class="a" style="left:190px;top:657px;width:63px;height:28px;background:linear-gradient(#c8c8c8,#a8a8a8 55%,#989898);border-radius:2px;box-shadow:1px 1px 1px rgba(0,0,0,.25);"></div>
<span class="t " style="left:195.5px;top:656.5px;transform:scaleX(0.83);">MUC-Jung:</span>
<div class="a" style="left:190px;top:691px;width:1500px;height:30px;background:linear-gradient(#e6f1e6,#d0e4d0 55%,#c0dac0);border-radius:2px;box-shadow:1px 1px 1px rgba(0,0,0,.25);border-radius:0"></div>
<span class="t " style="left:195.5px;top:690.5px;transform:scaleX(0.83);">MUC-Firma LiPuma-MUC</span>
<span class="t " style="left:195.5px;top:704.5px;transform:scaleX(0.83);">Fahrer: Martin Haß</span>
<div class="a" style="left:190px;top:738px;width:70px;height:3px;background:#f04040"></div>
<div class="a" style="left:257px;top:725px;width:1400px;height:28px;background:linear-gradient(#ff7070,#f04848 55%,#e83838);border-radius:2px;box-shadow:1px 1px 1px rgba(0,0,0,.25);"></div>
<span class="t " style="left:263px;top:724.5px;transform:scaleX(0.83);">MUC-Firma Sto</span>
<div class="a" style="left:256px;top:725px;width:4px;height:28px;background:linear-gradient(#2a9a2a,#0a7a0a)"></div>
<div class="a" style="left:190px;top:861px;width:1500px;height:30px;background:linear-gradient(#e6f1e6,#d0e4d0 55%,#c0dac0);border-radius:2px;box-shadow:1px 1px 1px rgba(0,0,0,.25);border-radius:0"></div>
<span class="t " style="left:195.5px;top:860.5px;transform:scaleX(0.83);">MUC-Firma Stamatis-MUC</span>
<div class="a" style="left:190px;top:861px;width:4px;height:30px;background:linear-gradient(#ff7070,#e84040)"></div>
<div class="a" style="left:190px;top:895px;width:1500px;height:30px;background:linear-gradient(#e6f1e6,#d0e4d0 55%,#c0dac0);border-radius:2px;box-shadow:1px 1px 1px rgba(0,0,0,.25);border-radius:0"></div>
<span class="t " style="left:195.5px;top:894.5px;transform:scaleX(0.83);">MUC-Firma Penner-MUC</span>
<div class="a" style="left:1581px;top:247px;width:60px;height:33px;background:#ffd2d2"></div>
<div class="a" style="left:1581px;top:281px;width:60px;height:33px;background:#fff"></div>
<div class="a" style="left:1560px;top:283px;width:61px;height:28px;background:linear-gradient(#d8e8fb,#b8d6f6 55%,#a8ccf2);border-radius:2px;box-shadow:1px 1px 1px rgba(0,0,0,.25);"></div>
<div class="a" style="left:1581px;top:349px;width:60px;height:33px;background:#fff"></div>
<div class="a" style="left:1581px;top:417px;width:60px;height:33px;background:#fff"></div>
<div class="a" style="left:1560px;top:419px;width:100px;height:28px;background:linear-gradient(#dcdcff,#c8c8fa 55%,#b8b8f2);border-radius:2px;box-shadow:1px 1px 1px rgba(0,0,0,.25);"></div>
<div class="a" style="left:1581px;top:485px;width:60px;height:33px;background:#fff"></div>
<div class="a" style="left:1560px;top:487px;width:53px;height:28px;background:linear-gradient(#d8e8fb,#b8d6f6 55%,#a8ccf2);border-radius:2px;box-shadow:1px 1px 1px rgba(0,0,0,.25);"></div>
<div class="a" style="left:1607px;top:487px;width:6px;height:28px;background:linear-gradient(#ff8080,#f04848);border-radius:0 2px 2px 0"></div>
<div class="a" style="left:1581px;top:553px;width:60px;height:33px;background:#fff"></div>
<div class="a" style="left:1581px;top:602px;width:60px;height:3px;background:#f03838"></div>
<div class="a" style="left:1581px;top:689px;width:60px;height:33px;background:#fff"></div>
<div class="a" style="left:1560px;top:691px;width:100px;height:28px;background:linear-gradient(#90ff90,#40e840 50%,#18d818);border-radius:2px;box-shadow:1px 1px 1px rgba(0,0,0,.25);border-radius:0"></div>
<div class="a" style="left:1581px;top:722px;width:60px;height:2px;background:#111"></div>
<div class="a" style="left:1581px;top:723px;width:60px;height:33px;background:#ffd2d2"></div>
<div class="a" style="left:1581px;top:859px;width:60px;height:33px;background:#fff"></div>
<div class="a" style="left:1560px;top:861px;width:100px;height:30px;background:linear-gradient(#e6f1e6,#d0e4d0 55%,#c0dac0);border-radius:2px;box-shadow:1px 1px 1px rgba(0,0,0,.25);border-radius:0"></div>
<div class="a" style="left:1581px;top:893px;width:60px;height:33px;background:#fff"></div>
<div class="a" style="left:1560px;top:895px;width:100px;height:30px;background:linear-gradient(#e6f1e6,#d0e4d0 55%,#c0dac0);border-radius:2px;box-shadow:1px 1px 1px rgba(0,0,0,.25);border-radius:0"></div>
<div class="a" style="left:334px;top:130px;width:1247px;height:779px;background:#1b3d70;border-radius:7px 7px 0 0;box-shadow:inset 0 1px 0 #3f6c9e, inset 2px 0 0 #28508a, inset -2px 0 0 #24497f, inset 0 -1px 0 #24497f"></div>
<div class="a" style="left:336px;top:131px;width:1243px;height:20px;background:linear-gradient(#3a6798,#244e84 45%,#1b3d70);border-radius:6px 6px 0 0"></div>
<div class="a" style="left:341px;top:158px;width:1233px;height:744px;background:#e2eaf3"></div>
<span class="t b" style="left:342px;top:137.5px;transform:scaleX(0.97);font-size:12px;color:#466a96;">Mietvertrag</span>
<div class="btn" style="left:349px;top:163px;width:60px;height:39px;border-radius:5px"></div>
<span class="t lb" style="left:352px;top:214px;">Sta</span>
<span class="t lb" style="left:352px;top:236px;">MV</span>
<span class="t lb" style="left:352px;top:258px;">Ha</span>
<div class="cbo" style="left:352px;top:294.5px"></div>
<svg style="left:354px;top:297.5px" width="10" height="9"><path d="M1 4.5 3.8 7.5 9 1" fill="none" stroke="#7a3010" stroke-width="1.7"/></svg>
<div class="a" style="left:343px;top:324px;width:1230px;height:339px;border:1px solid #b4cce2;border-radius:5px"></div>
<div class="a" style="left:349px;top:316px;width:30px;height:14px;background:#e2eaf3"></div>
<span class="t lb" style="left:352px;top:315px;">Ab</span>
<span class="t lb" style="left:346px;top:336px;">KM</span>
<span class="t lb" style="left:346px;top:361px;">Abfa</span>
<span class="t lb" style="left:346px;top:386px;">Vor.</span>
<span class="t lb" style="left:346px;top:411px;">Split</span>
<span class="t lb" style="left:346px;top:436px;">Vor.</span>
<span class="t lb" style="left:346px;top:461px;">Bet.</span>
<span class="t lb" style="left:346px;top:486px;">gepl</span>
<span class="t lb" style="left:346px;top:511px;">Pers</span>
<span class="t lb" style="left:346px;top:536px;">Pers</span>
<span class="t lb" style="left:346px;top:617px;">Stat</span>
<div class="inp" style="left:349px;top:636px;width:60px;height:19px;"></div>
<span class="t " style="left:352px;top:638px;">42</span>
<div class="a" style="left:343px;top:673px;width:1230px;height:228px;border:1px solid #b4cce2;border-radius:5px;background:linear-gradient(90deg,#dbe6f1,#dbe6f1 60px,#e2eaf3 61px)"></div>
<div class="a" style="left:350px;top:665px;width:20px;height:14px;background:#e2eaf3"></div>
<span class="t lb" style="left:353px;top:664px;">Re</span>
<div class="cbo" style="left:347px;top:681px"></div><div class="cb" style="left:347px;top:695px"></div>
<svg style="left:349px;top:684px" width="10" height="9"><path d="M1 4.5 3.8 7.5 9 1" fill="none" stroke="#7a3010" stroke-width="1.7"/></svg>
<div class="a" style="left:343px;top:730px;width:100px;height:172px;background:#fff;border:1px solid #9a9a9a;border-bottom:none"></div>
<div class="a" style="left:344px;top:731px;width:12px;height:113px;background:#f0f0f0"></div>
<div class="a" style="left:356px;top:750px;width:40px;height:94px;background:#ffcaca"></div>
<div class="a" style="left:344px;top:731px;width:60px;height:19px;background:#fff;border-bottom:1px solid #c0c0c0"></div>
<div class="a" style="left:344px;top:750px;width:60px;height:1px;background:#b8b8b8"></div>
<div class="a" style="left:344px;top:769px;width:60px;height:1px;background:#b8b8b8"></div>
<div class="a" style="left:344px;top:788px;width:60px;height:1px;background:#b8b8b8"></div>
<div class="a" style="left:344px;top:806px;width:60px;height:1px;background:#b8b8b8"></div>
<div class="a" style="left:344px;top:825px;width:60px;height:1px;background:#b8b8b8"></div>
<div class="a" style="left:344px;top:844px;width:60px;height:1px;background:#b8b8b8"></div>
<div class="a" style="left:355px;top:731px;width:1px;height:113px;background:#b8b8b8"></div>
<span class="t " style="left:360px;top:734.5px;">P</span>
<svg style="left:347px;top:755px" width="6" height="9"><path d="M0 0 5.5 4.5 0 9Z" fill="#111"/></svg>
<span class="t " style="left:360px;top:790.5px;transform:scaleX(0.9);">9</span>
<span class="t " style="left:360px;top:809px;transform:scaleX(0.9);">9</span>
<span class="t " style="left:360px;top:828px;transform:scaleX(0.9);">9</span>
<div class="ln" style="left:1520px;top:159px;width:54px;background:#e2eaf3"></div>
<div class="a" style="left:345px;top:881px;width:17px;height:17px;background:#dcdcdc;border:1px solid #8c8c8c"></div>
<svg style="left:345px;top:881px" width="17" height="17"><path d="M4.5 8.5H12.5M8.5 4.5V12.5" fill="none" stroke="#10a010" stroke-width="2.2"/></svg>
<div class="a" style="left:363px;top:881px;width:16px;height:16px;background:#f2f2f2;border:1px solid #c4c8cc"></div>
<svg style="left:363px;top:881px" width="16" height="16"><path d="M3.5 8H12.5" fill="none" stroke="#b4b4b4" stroke-width="1.4"/></svg>
<div class="a" style="left:381px;top:881px;width:16px;height:16px;background:#f2f2f2;border:1px solid #c4c8cc"></div>
<svg style="left:381px;top:881px" width="16" height="16"><path d="M3.5 8 6.5 11 12.5 4.5" fill="none" stroke="#b4b4b4" stroke-width="2"/></svg>
<div class="a" style="left:394px;top:135px;width:1127px;height:770px;background:#1b3d70;border-radius:7px 7px 0 0;box-shadow:inset 0 1px 0 #3f6c9e, inset 2px 0 0 #28508a, inset -2px 0 0 #24497f, inset 0 -1px 0 #24497f"></div>
<div class="a" style="left:396px;top:136px;width:1123px;height:19px;background:linear-gradient(#3a6798,#244e84 45%,#1b3d70);border-radius:6px 6px 0 0"></div>
<div class="a" style="left:401px;top:162px;width:1113px;height:736px;background:#e2eaf3"></div>
<svg style="left:400px;top:141px" width="15" height="15"><use href="#logo"/></svg>
<span class="t b" style="left:420px;top:142px;transform:scaleX(0.995);font-size:12px;color:#466a96;">Vertragsabrechnung</span>
<svg style="left:1462px;top:142px" width="52" height="12" viewBox="0 0 52 12"><path d="M0 9.5H8" stroke="#5e86b4" stroke-width="2.4"/><rect x="19.5" y="1.5" width="10" height="8.5" fill="none" stroke="#5e86b4" stroke-width="1.3"/><path d="M19 2H30" stroke="#5e86b4" stroke-width="2.2"/><path d="M39 1 49 10.5M49 1 39 10.5" stroke="#5e86b4" stroke-width="2.2"/></svg>
<div class="a" style="left:401px;top:873px;width:1113px;height:25px;background:#fff"></div>
<div class="a" style="left:403px;top:873px;width:1px;height:25px;background:#9db9d6"></div>
<div class="a" style="left:401px;top:896px;width:1113px;height:2px;background:#9db9d6"></div>
<div class="a" style="left:901px;top:873px;width:5px;height:25px;background:#c9d9ea"></div>
<div class="a" style="left:404px;top:879px;width:496px;height:17px;background:#fff;border:1px solid #c4c4c4"></div>
<div class="a" style="left:404px;top:879px;width:17px;height:17px;background:#fff;border:1px solid #c4c4c4"></div>
<div class="a" style="left:883px;top:879px;width:17px;height:17px;background:#fff;border:1px solid #c4c4c4"></div>
<svg style="left:408.5px;top:882.5px" width="8" height="10"><path d="M6 1 1.5 5 6 9" fill="none" stroke="#444" stroke-width="1.5"/></svg>
<svg style="left:887.5px;top:882.5px" width="8" height="10"><path d="M2 1 6.5 5 2 9" fill="none" stroke="#444" stroke-width="1.5"/></svg>
<div class="a" style="left:421px;top:880px;width:264px;height:15px;background:#dcdcdc"></div>
<div class="a" style="left:549px;top:884px;width:1.4px;height:7px;background:#555"></div>
<div class="a" style="left:552px;top:884px;width:1.4px;height:7px;background:#555"></div>
<div class="a" style="left:555px;top:884px;width:1.4px;height:7px;background:#555"></div>
<div class="a" style="left:908px;top:879px;width:604px;height:17px;background:#fff;border:1px solid #c4c4c4"></div>
<div class="a" style="left:908px;top:879px;width:17px;height:17px;background:#fff;border:1px solid #c4c4c4"></div>
<div class="a" style="left:1495px;top:879px;width:17px;height:17px;background:#fff;border:1px solid #c4c4c4"></div>
<svg style="left:912.5px;top:882.5px" width="8" height="10"><path d="M6 1 1.5 5 6 9" fill="none" stroke="#444" stroke-width="1.5"/></svg>
<svg style="left:1499.5px;top:882.5px" width="8" height="10"><path d="M2 1 6.5 5 2 9" fill="none" stroke="#444" stroke-width="1.5"/></svg>
<div class="a" style="left:924px;top:880px;width:435px;height:15px;background:#dcdcdc"></div>
<div class="a" style="left:1137.5px;top:884px;width:1.4px;height:7px;background:#555"></div>
<div class="a" style="left:1140.5px;top:884px;width:1.4px;height:7px;background:#555"></div>
<div class="a" style="left:1143.5px;top:884px;width:1.4px;height:7px;background:#555"></div>
<div class="a" style="left:366px;top:166px;width:1183px;height:708px;background:#1b3d70;border-radius:7px 7px 0 0;box-shadow:inset 0 1px 0 #3f6c9e, inset 2px 0 0 #28508a, inset -2px 0 0 #24497f, inset 0 -1px 0 #24497f"></div>
<div class="a" style="left:368px;top:167px;width:1179px;height:20px;background:linear-gradient(#3a6798,#244e84 45%,#1b3d70);border-radius:6px 6px 0 0"></div>
<div class="a" style="left:373px;top:194px;width:1169px;height:673px;background:#e2eaf3"></div>
<svg style="left:372px;top:172.5px" width="15" height="15"><use href="#logo"/></svg>
<span class="t b" style="left:392px;top:173.5px;transform:scaleX(0.97);font-size:12px;color:#fff;text-shadow:0 0 2px #10284c">Rechnung No : RE300343676-1</span>
<svg style="left:1490px;top:173.5px" width="52" height="12" viewBox="0 0 52 12"><path d="M0 9.5H8" stroke="#a9cbe8" stroke-width="2.4"/><rect x="19.5" y="1.5" width="10" height="8.5" fill="none" stroke="#a9cbe8" stroke-width="1.3"/><path d="M19 2H30" stroke="#a9cbe8" stroke-width="2.2"/><path d="M39 1 49 10.5M49 1 39 10.5" stroke="#a9cbe8" stroke-width="2.2"/></svg>
<div class="btn" style="left:384px;top:199px;width:66px;height:48px;background:linear-gradient(#fba47e,#f88f66 50%,#f3805a);border-color:#c98a70;border-radius:5px"></div>
<svg style="left:408px;top:207px" width="18" height="18" viewBox="0 0 18 18"><path d="M1.500 9.500 6 14.500 16 2.500" fill="none" stroke="#1c2c8c" stroke-width="3.200"/><path d="M1.500 8.500 6 13.300 16 1.500" fill="none" stroke="#18b418" stroke-width="2.400"/></svg>
<span class="t c " style="left:267px;top:226.5px;">OK (F2)</span>
<div class="btn" style="left:453px;top:199px;width:66px;height:48px;;border-radius:5px"></div>
<svg style="left:478px;top:207px" width="18" height="18" viewBox="0 0 18 18"><path d="M2.500 3 13.500 15M13.500 3 2.500 15" stroke="#6a0a0a" stroke-width="3.600"/><path d="M2.500 2.300 13.500 14.300M13.500 2.300 2.500 14.300" stroke="#d41818" stroke-width="2.300"/></svg>
<span class="t c " style="left:336px;top:226.5px;">Abbr.(ESC)</span>
<div class="btn" style="left:530px;top:199px;width:66px;height:48px;;border-radius:5px"></div>
<svg style="left:556px;top:207px" width="18" height="18" viewBox="0 0 18 18"><rect x="4.500" y="0" width="4" height="2" fill="#111"/><path d="M1 3H12" stroke="#111" stroke-width="1.800"/><path d="M2.500 4.500H10.500V15.300H2.500Z" fill="#fff" stroke="#111" stroke-width="1.400"/><path d="M4.700 5V15M8.300 5V15" stroke="#111" stroke-width="1.100"/><path d="M6.500 5V15" stroke="#111" stroke-width="1" stroke-dasharray="1.500 1"/><path d="M0 8.500H1.500M11.500 8.500H13" stroke="#111" stroke-width="1"/></svg>
<span class="t c " style="left:413px;top:226.5px;">Löschen</span>
<div class="btn" style="left:599px;top:199px;width:66px;height:48px;;border-radius:5px"></div>
<svg style="left:624px;top:207px" width="18" height="18" viewBox="0 0 18 18"><path d="M0 3.200 3.800 0 6.600 3.600 2.800 6.800Z" fill="#111"/><path d="M2.800 6.800 6.600 3.600 7.800 5 4 8.200Z" fill="#28d8e0"/><path d="M4 8.200 7.800 5 12.500 8V12.500L10.500 14.500H8.500Z" fill="#f4e84a" stroke="#111" stroke-width=".900"/><path d="M8 8.500 11 11.500M9.500 7.500 12 10" stroke="#111" stroke-width=".900"/><path d="M12.300 1 13.300 13.500" stroke="#111" stroke-width="2.400"/><path d="M12.300 2 13.200 13" stroke="#f4e030" stroke-width="1.200"/><path d="M0 15H7.500" stroke="#888" stroke-width="1.200"/><path d="M9 15H10M15 15H16" stroke="#888" stroke-width="1"/><rect x="11.300" y="14.200" width="2.800" height="1.800" fill="#f01010"/></svg>
<span class="t c " style="left:482px;top:226.5px;">Storno</span>
<div class="btn" style="left:668px;top:199px;width:66px;height:48px;;border-radius:5px"></div>
<svg style="left:692.5px;top:207px" width="18" height="18" viewBox="0 0 18 18"><rect x="7.5" y="3.5" width="8" height="10" fill="#fffff0" stroke="#111" stroke-width="1.300"/><path d="M9.1 5.8H13.9" stroke="#2030d0" stroke-width=".900"/><path d="M9.1 7.1H13.9" stroke="#f0e040" stroke-width=".900"/><path d="M9.1 8.4H13.9" stroke="#2030d0" stroke-width=".900"/><path d="M9.1 9.7H13.9" stroke="#f0e040" stroke-width=".900"/><path d="M9.1 11H13.9" stroke="#2030d0" stroke-width=".900"/><rect x="1.5" y="5.5" width="7.5" height="10" fill="#fffff0" stroke="#111" stroke-width="1.300"/><path d="M3.1 7.8H7.4" stroke="#2030d0" stroke-width=".900"/><path d="M3.1 9.1H7.4" stroke="#f0e040" stroke-width=".900"/><path d="M3.1 10.4H7.4" stroke="#2030d0" stroke-width=".900"/><path d="M3.1 11.7H7.4" stroke="#f0e040" stroke-width=".900"/><path d="M3.1 13H7.4" stroke="#2030d0" stroke-width=".900"/><path d="M9.500 15.800H16.300V5" stroke="#111" stroke-width="1" fill="none"/><path d="M14.500 0V6M11.500 3H17.500" stroke="#10c010" stroke-width="2.200"/></svg>
<span class="t c " style="left:551px;top:228.5px;">Kopieren</span>
<div class="btn" style="left:743px;top:199px;width:66px;height:48px;;border-radius:5px"></div>
<svg style="left:768px;top:207px" width="18" height="18" viewBox="0 0 18 18"><path d="M4.500 0.600H9.500L12 3V8.500H4.500Z" fill="#fff" stroke="#111" stroke-width="1.200"/><path d="M6 2.500H8M6 4.500H7M8.500 4.500H10.500M6 6.500H10.500" stroke="#111" stroke-width="1.100"/><rect x="0.700" y="8.500" width="14.600" height="4.500" fill="#fff" stroke="#111" stroke-width="1.400"/><path d="M2.500 10.800H12" stroke="#111" stroke-width="1.200" stroke-dasharray="1 .700"/><rect x="12.600" y="10" width="1.600" height="1.600" fill="#f01010"/><rect x="0.700" y="13" width="14.600" height="2.600" fill="#b8b8b8" stroke="#111" stroke-width="1.200"/></svg>
<span class="t c " style="left:626px;top:226.5px;">Drucken</span>
<div class="btn" style="left:812px;top:199px;width:66px;height:48px;;border-radius:5px"></div>
<svg style="left:837.5px;top:207px" width="18" height="18" viewBox="0 0 18 18"><path d="M0.700 4.500H8V14.800H0.700Z" fill="#fff" stroke="#111" stroke-width="1.300"/><circle cx="7.300" cy="4.800" r="4.300" fill="#e8f4f8" fill-opacity=".85" stroke="#111" stroke-width="1.100"/><path d="M4.500 3.600H9.500M5 5.600H9" stroke="#111" stroke-width=".900"/><path d="M3.500 4.600 4.500 6.500M4 2.800 5.500 2" stroke="#28d8e0" stroke-width="1"/><path d="M10.300 8 15.300 13.600" stroke="#111" stroke-width="2.300"/></svg>
<span class="t c " style="left:695px;top:226.5px;">Vorschau</span>
<div class="btn" style="left:881px;top:199px;width:67px;height:48px;background:linear-gradient(#f6f9fc,#e9f0f7);border-color:#cfdcea;border-radius:5px"></div>
<svg style="left:905.5px;top:209.5px" width="18" height="18" viewBox="0 0 18 18"><rect x="5" y="0.700" width="11" height="9.300" fill="#fff" stroke="#111" stroke-width="1.400"/><rect x="13.600" y="1.200" width="2" height="1.800" fill="#f01010"/><path d="M7 2.600H9M9 5.300H13M9.500 7.700H13" stroke="#1818e0" stroke-width="1.200"/><path d="M0.500 1.500H4M1 3.800H4M0.500 6.100H4M1 8.400H4" stroke="#1818e0" stroke-width="1.100" stroke-dasharray="1 .700"/></svg>
<span class="t c " style="left:764.5px;top:226.5px;">E-Mail</span>
<div class="btn" style="left:950px;top:199px;width:66px;height:48px;;border-radius:5px"></div>
<svg style="left:975px;top:207px" width="18" height="18" viewBox="0 0 18 18"><path d="M4.500 0.600H9.500L12 3V8.500H4.500Z" fill="#fff" stroke="#111" stroke-width="1.200"/><path d="M6 2.500H8M6 4.500H7M8.500 4.500H10.500M6 6.500H10.500" stroke="#111" stroke-width="1.100"/><rect x="0.700" y="8.500" width="14.600" height="4.500" fill="#fff" stroke="#111" stroke-width="1.400"/><path d="M2.500 10.800H12" stroke="#111" stroke-width="1.200" stroke-dasharray="1 .700"/><rect x="12.600" y="10" width="1.600" height="1.600" fill="#f01010"/><rect x="0.700" y="13" width="14.600" height="2.600" fill="#b8b8b8" stroke="#111" stroke-width="1.200"/></svg>
<span class="t c " style="left:833px;top:226.5px;">Scheck</span>
<div class="btn" style="left:1024px;top:199px;width:68px;height:48px;background:linear-gradient(#f6f9fc,#e9f0f7);border-color:#cfdcea;border-radius:5px"></div>
<svg style="left:1049.5px;top:207px" width="18" height="18" viewBox="0 0 18 18"><path d="M1 8 7.500 1.500 16 10 10 15.500Z" fill="#22a040" stroke="#0a4a1a" stroke-width="1"/><path d="M4.500 8 8 4.500 13 10 9.800 13Z" fill="#48d070"/><path d="M6 8.500 9.500 12" stroke="#0a6a2a" stroke-width="1"/><circle cx="2.500" cy="2.800" r="1.800" fill="#f4f090" stroke="#888" stroke-width=".500"/><circle cx="5" cy="1.200" r="1.200" fill="#e0d040"/><circle cx="8" cy="14.500" r="1.700" fill="#e8e060" stroke="#666" stroke-width=".500"/><circle cx="13.500" cy="14" r="2" fill="#f4f4c8" stroke="#666" stroke-width=".600"/><circle cx="15.500" cy="11" r="1.200" fill="#e0d040"/></svg>
<span class="t c " style="left:908px;top:226.5px;">Zahlung(F7)</span>
<div class="btn" style="left:1100px;top:199px;width:66px;height:48px;;border-radius:5px"></div>
<svg style="left:1125px;top:207px" width="18" height="18" viewBox="0 0 18 18"><path d="M5.500 0.700H12.500L15.800 4V15.500H5.500Z" fill="#fff" stroke="#111" stroke-width="1.200"/><path d="M8 4H13M8 6.500H14M10 9H14M10 11.500H14M8 13.500H13" stroke="#111" stroke-width="1" stroke-dasharray="1.200 1"/><path d="M0 8H2V13.500H0Z" fill="#28d8e0"/><path d="M2 8 6 6.500 9.500 9V12L7.500 14H2Z" fill="#f4e84a" stroke="#111" stroke-width=".900"/><path d="M1.800 0.500 9.500 8.500" stroke="#111" stroke-width="2.400"/><path d="M2.300 1 9 8" stroke="#f4e030" stroke-width="1.100"/><path d="M1.800 0.500 3 1.700" stroke="#e01010" stroke-width="1.400"/></svg>
<span class="t c " style="left:983px;top:226.5px;">Brief</span>
<div class="btn" style="left:1171px;top:199px;width:66px;height:48px;;border-radius:5px"></div>
<svg style="left:1196px;top:207px" width="18" height="18" viewBox="0 0 18 18"><path d="M0.600 0.600H3V13.500H0.600Z" fill="#fff" stroke="#111" stroke-width="1.200"/><path d="M2.600 1.600H5.500V14.500H2.600Z" fill="#fff" stroke="#111" stroke-width="1.200"/><path d="M5 2.800H11.500L15.300 6.500V15.500H5Z" fill="#fff" stroke="#111" stroke-width="1.300"/><path d="M11.300 3V6.700H15" fill="none" stroke="#111" stroke-width="1"/><path d="M7 8.500H13.500M7 10.700H13.500M7 12.900H13.500" stroke="#111" stroke-width="1.100"/><path d="M7 6H9.500" stroke="#111" stroke-width="1.100"/></svg>
<span class="t c " style="left:1054px;top:226.5px;">Dokumente</span>
<div class="btn" style="left:1242px;top:199px;width:66px;height:48px;;border-radius:5px"></div>
<svg style="left:1266.5px;top:206px" width="18" height="18" viewBox="0 0 18 18"><path d="M9.500 1C9.500 -.300 16.500 -.300 16.500 1V15.500C16.500 17 9.500 17 9.500 15.500Z" fill="#b01c1c" stroke="#600808" stroke-width="1"/><path d="M11 3V15M13 2.500V15.500M15 3V15" stroke="#f4d0d0" stroke-width="1" stroke-dasharray="1 1"/><circle cx="6" cy="10.500" r="4" fill="#c8c8c8" stroke="#111" stroke-width="1.500"/><circle cx="6" cy="10.500" r="1.800" fill="#888"/><path d="M3.500 13.500 0.500 16.800" stroke="#111" stroke-width="2"/></svg>
<span class="t c " style="left:1125px;top:228.5px;">Historie</span>
<div class="btn" style="left:1313px;top:199px;width:67px;height:48px;;border-radius:5px"></div>
<span class="t c " style="left:1196.5px;top:217px;">ausgeb. OP's</span>
<div class="a" style="left:1177px;top:239px;width:7px;height:1px;background:#000"></div>
<div class="vl" style="left:523px;top:197px;height:51px;background:#b4c9de"></div>
<div class="vl" style="left:524px;top:197px;height:51px;background:#f4f8fc"></div>
<div class="vl" style="left:737px;top:197px;height:51px;background:#b4c9de"></div>
<div class="vl" style="left:738px;top:197px;height:51px;background:#f4f8fc"></div>
<div class="vl" style="left:1019px;top:197px;height:51px;background:#b4c9de"></div>
<div class="vl" style="left:1020px;top:197px;height:51px;background:#f4f8fc"></div>
<div class="vl" style="left:1094px;top:197px;height:51px;background:#b4c9de"></div>
<div class="vl" style="left:1095px;top:197px;height:51px;background:#f4f8fc"></div>
<div class="vl" style="left:1384px;top:197px;height:51px;background:#b4c9de"></div>
<div class="vl" style="left:1385px;top:197px;height:51px;background:#f4f8fc"></div>
<div class="a" style="left:371px;top:251px;width:1086px;height:40px;border:5px solid #ec1c24"></div>
<span class="t lb" style="left:389px;top:263px;">Schleppmitarbeiter :</span>
<div class="inp" style="left:494px;top:260px;width:142px;height:19px;"></div>
<div class="a" style="left:496px;top:262px;width:123px;height:15px;background:#f07a42"></div>
<div class="sp" style="left:619px;top:262px;width:15px;height:15px"></div>
<svg style="left:623px;top:263.5px" width="8" height="12"><use href="#spin"/></svg>
<div class="btn" style="left:645px;top:260px;width:18px;height:19px;border-radius:3px"></div>
<svg style="left:649px;top:264px" width="10" height="11"><path d="M1.500 1 8.500 10M8.500 1 1.500 10" stroke="#222" stroke-width="1.2"/></svg>
<div class="cb" style="left:1306px;top:261px"></div>
<span class="t " style="left:1323px;top:261px;">Mietumsatz relevant</span>
<div class="btn" style="left:386px;top:322px;width:84px;height:16px;border-radius:5px"></div>
<span class="t c " style="left:278px;top:323px;">Empfänger(F4)</span>
<span class="t lb" style="left:492px;top:323px;transform:scaleX(0.88);">1011861</span>
<span class="t lb" style="left:385px;top:343px;">Firma Hitzemann</span>
<span class="t lb" style="left:385px;top:377px;">Meierweg. 1765</span>
<span class="t lb" style="left:385px;top:395px;transform:scaleX(0.88);">23547</span>
<span class="t lb" style="left:437px;top:395px;">Kilterstetten</span>
<div class="ln" style="left:385px;top:416px;width:146px;background:#b4c9de"></div>
<div class="btn" style="left:386px;top:426px;width:84px;height:16px;border-radius:5px"></div>
<span class="t c " style="left:278px;top:427px;">Kunde(F5)</span>
<span class="t lb" style="left:492px;top:427px;transform:scaleX(0.88);">1011861</span>
<span class="t lb" style="left:385px;top:447px;">Firma Hitzemann</span>
<span class="t lb" style="left:385px;top:481px;">Meierweg. 1765</span>
<span class="t lb" style="left:385px;top:499px;transform:scaleX(0.88);">23547</span>
<span class="t lb" style="left:437px;top:499px;">Kilterstetten</span>
<div class="vl" style="left:536px;top:320px;height:200px;"></div>
<div class="vl" style="left:786px;top:320px;height:250px;"></div>
<div class="vl" style="left:926px;top:320px;height:250px;"></div>
<span class="t lb" style="left:545px;top:327px;">RE-Nr :</span>
<span class="t lb" style="left:545px;top:351px;">Rechnungsdatum :</span>
<span class="t lb" style="left:545px;top:375px;">Buchungsdatum :</span>
<span class="t lb" style="left:545px;top:399px;">Fällig zum :</span>
<span class="t lb" style="left:545px;top:423px;">Bearbeiter :</span>
<div class="inp" style="left:642px;top:324px;width:135px;height:20px;"></div>
<span class="t " style="left:645px;top:326.5px;">RE300343676-1</span>
<div class="a" style="left:642px;top:348px;width:135px;height:20px;background:#fff;border:1px solid #c8c8c8"></div>
<span class="t gy" style="left:643.5px;top:350.5px;transform:scaleX(0.96);font-size:12px">02.11.2021</span>
<svg style="left:763px;top:355px" width="10" height="8"><path d="M1 1.500 5 6 9 1.500" fill="none" stroke="#b0b0b0" stroke-width="1.6"/></svg>
<div class="a" style="left:642px;top:372px;width:135px;height:20px;background:#fff;border:1px solid #c8c8c8"></div>
<span class="t gy" style="left:643.5px;top:374.5px;transform:scaleX(0.96);font-size:12px">02.11.2021</span>
<svg style="left:763px;top:379px" width="10" height="8"><path d="M1 1.500 5 6 9 1.500" fill="none" stroke="#b0b0b0" stroke-width="1.6"/></svg>
<div class="a" style="left:642px;top:396px;width:135px;height:20px;background:#fff;border:1px solid #555"></div>
<span class="t " style="left:643.5px;top:398.5px;transform:scaleX(0.96);font-size:12px">02.11.2021</span>
<svg style="left:763px;top:403px" width="10" height="8"><path d="M1 1.500 5 6 9 1.500" fill="none" stroke="#333" stroke-width="1.6"/></svg>
<div class="inp" style="left:642px;top:420px;width:135px;height:20px;"></div>
<span class="t gy" style="left:645px;top:422.5px;">marc</span>
<div class="ln" style="left:545px;top:444px;width:238px;background:#b4c9de"></div>
<span class="t lb" style="left:545px;top:447px;">Zahlungsart / Gültig bis</span>
<div class="inp" style="left:546px;top:464px;width:140px;height:19px;"></div>
<div class="sp" style="left:669px;top:466px;width:15px;height:15px"></div>
<svg style="left:673px;top:467.5px" width="8" height="12"><use href="#spin"/></svg>
<span class="t " style="left:550px;top:465.9px;">Bar</span>
<span class="t lb" style="left:689px;top:466px;">/</span>
<div class="inp" style="left:695px;top:464px;width:40px;height:19px;"></div>
<span class="t " style="left:698px;top:466px;">09/16</span>
<div class="btn" style="left:760px;top:463px;width:21px;height:21px;border-radius:4px"></div>
<div class="a" style="left:763.5px;top:472px;width:14px;height:2px;background:#111"></div>
<span class="t lb" style="left:797px;top:324px;">verbucht</span>
<span class="t lb" style="left:797px;top:348px;">Zahlungen drucken</span>
<span class="t lb" style="left:797px;top:372px;">Gedruckt</span>
<span class="t lb" style="left:797px;top:444px;">Digital signieren</span>
<div class="cbo" style="left:906px;top:324px"></div>
<svg style="left:908px;top:327px" width="10" height="9"><path d="M1 4.500 3.800 7.500 9 1" fill="none" stroke="#7a3010" stroke-width="1.7"/></svg>
<div class="cbo" style="left:906px;top:348px"></div>
<svg style="left:908px;top:351px" width="10" height="9"><path d="M1 4.500 3.800 7.500 9 1" fill="none" stroke="#7a3010" stroke-width="1.7"/></svg>
<div class="cb" style="left:906px;top:372px"></div>
<div class="cbo" style="left:906px;top:444px"></div>
<span class="t lb" style="left:937px;top:323px;">St.-Nr :</span>
<span class="t lb" style="left:937px;top:347px;">Zusatztext :</span>
<span class="t lb" style="left:937px;top:371px;">Bemerkung :</span>
<span class="t lb" style="left:937px;top:395px;">Buchungstext :</span>
<span class="t lb" style="left:937px;top:419px;">Liefer/Leistung :</span>
<span class="t lb" style="left:937px;top:443px;">Stornogrund :</span>
<div class="inp" style="left:1014px;top:320px;width:235px;height:19px;"></div>
<div class="inp" style="left:1014px;top:344px;width:235px;height:19px;"></div>
<span class="t " style="left:1016.5px;top:346px;transform:scaleX(0.84);">Das Leistungsdatum entspricht dem Mietzeitraum</span>
<div class="inp" style="left:1014px;top:368px;width:235px;height:19px;"></div>
<div class="inp" style="left:1014px;top:392px;width:235px;height:19px;"></div>
<span class="t " style="left:1017px;top:394px;">AR-RE300343676-1</span>
<div class="inp" style="left:1014px;top:440px;width:235px;height:19px;"></div>
<div class="btn" style="left:1267px;top:320px;width:80px;height:19px;border-radius:5px"></div>
<span class="t c " style="left:1157px;top:322.7px;">Re-Text oben</span>
<div class="btn" style="left:1267px;top:344px;width:80px;height:19px;border-radius:5px"></div>
<span class="t c " style="left:1157px;top:346.7px;">Re-Text unten</span>
<div class="a" style="left:1269px;top:371px;width:13px;height:13px;background:#fff;border:1px solid #444"></div>
<span class="t " style="left:1286px;top:371px;">weitere Verfolgung</span>
<div class="btn" style="left:1267px;top:440px;width:138px;height:19px;border-radius:5px"></div>
<span class="t c " style="left:1186px;top:442.7px;">Beschreibung 2 erstellen</span>
<div class="ln" style="left:937px;top:463px;width:595px;background:#b4c9de"></div>
<span class="t lb" style="left:937px;top:471px;">Zahlungen :</span>
<span class="t lb" style="left:1132px;top:471px;">OP : 963,90 €</span>
<div class="a" style="left:937px;top:488px;width:313px;height:72px;background:#fff;border:1px solid #8a8a8a"></div>
<span class="t c " style="left:950px;top:507px;color:#505050">Keine Daten vorhanden</span>
<div class="a" style="left:938px;top:541px;width:122px;height:18px;background:#f0f0f0"></div>
<div class="a" style="left:939px;top:542px;width:16px;height:16px;background:#f2f2f2;border:1px solid #c4c8cc"></div>
<svg style="left:939px;top:542px" width="16" height="16"><path d="M4 8H12M8 4V12" fill="none" stroke="#b4b4b4" stroke-width="2.2"/></svg>
<div class="a" style="left:957px;top:542px;width:16px;height:16px;background:#f2f2f2;border:1px solid #c4c8cc"></div>
<svg style="left:957px;top:542px" width="16" height="16"><path d="M3.5 8H12.5" fill="none" stroke="#b4b4b4" stroke-width="1.4"/></svg>
<div class="a" style="left:975px;top:542px;width:16px;height:16px;background:#f2f2f2;border:1px solid #c4c8cc"></div>
<svg style="left:975px;top:542px" width="16" height="16"><path d="M3.5 8 6.5 11 12.5 4.5" fill="none" stroke="#b4b4b4" stroke-width="2"/></svg>
<div class="a" style="left:993px;top:542px;width:16px;height:16px;background:#f2f2f2;border:1px solid #c4c8cc"></div>
<svg style="left:993px;top:542px" width="16" height="16"><path d="M3.5 3.5 12.5 12.5M12.5 3.5 3.5 12.5" fill="none" stroke="#b4b4b4" stroke-width="1.6"/></svg>
<div class="a" style="left:1060px;top:541px;width:189px;height:18px;background:#fff;border:1px solid #c4c4c4"></div>
<div class="a" style="left:1060px;top:541px;width:18px;height:18px;background:#fff;border:1px solid #c4c4c4"></div>
<div class="a" style="left:1231px;top:541px;width:18px;height:18px;background:#fff;border:1px solid #c4c4c4"></div>
<svg style="left:1065px;top:545px" width="8" height="10"><path d="M6 1 1.5 5 6 9" fill="none" stroke="#444" stroke-width="1.5"/></svg>
<svg style="left:1236px;top:545px" width="8" height="10"><path d="M2 1 6.5 5 2 9" fill="none" stroke="#444" stroke-width="1.5"/></svg>
<div class="a" style="left:1077px;top:542px;width:55px;height:16px;background:#dcdcdc"></div>
<div class="a" style="left:1100.5px;top:546.5px;width:1.4px;height:7px;background:#555"></div>
<div class="a" style="left:1103.5px;top:546.5px;width:1.4px;height:7px;background:#555"></div>
<div class="a" style="left:1106.5px;top:546.5px;width:1.4px;height:7px;background:#555"></div>
<div class="vl" style="left:1259px;top:471px;height:101px;"></div>
<span class="t lb" style="left:1267px;top:490px;">Status</span>
<div class="a" style="left:1313px;top:487.5px;width:218px;height:20.5px;background:#fff;border:1px solid #c8c8c8"></div>
<svg style="left:1517px;top:495px" width="10" height="8"><path d="M1 1.500 5 6 9 1.500" fill="none" stroke="#a0a0a0" stroke-width="1.5"/></svg>
<span class="t lb" style="left:1266px;top:514px;">Meldung</span>
<div class="a" style="left:1313px;top:511px;width:218px;height:49px;background:#fff;border:1px solid #c8c8c8"></div>
<div class="a" style="left:374px;top:572px;width:1168px;height:295px;background:#fff;border:1px solid #a0a0a0"></div>
<div class="a" style="left:375px;top:591px;width:11px;height:95px;background:#f0f0f0"></div>
<div class="a" style="left:386px;top:591px;width:827px;height:19px;background:#3399ff"></div>
<div class="a" style="left:386px;top:591px;width:35px;height:19px;background:#ffcccc"></div>
<div class="a" style="left:386px;top:610px;width:827px;height:76px;background:#ffcccc"></div>
<div class="a" style="left:376px;top:590px;width:837px;height:1px;background:#a8a8a8"></div>
<div class="a" style="left:376px;top:609px;width:837px;height:1px;background:#a8a8a8"></div>
<div class="a" style="left:376px;top:628px;width:837px;height:1px;background:#a8a8a8"></div>
<div class="a" style="left:376px;top:647px;width:837px;height:1px;background:#a8a8a8"></div>
<div class="a" style="left:376px;top:666px;width:837px;height:1px;background:#a8a8a8"></div>
<div class="a" style="left:376px;top:685px;width:837px;height:1px;background:#a8a8a8"></div>
<div class="a" style="left:376px;top:590px;width:837px;height:1px;background:#c8c8c8"></div>
<div class="a" style="left:385px;top:573px;width:1px;height:113px;background:#a8a8a8"></div>
<div class="a" style="left:385px;top:573px;width:1px;height:17px;background:#d8d8d8"></div>
<div class="a" style="left:420px;top:573px;width:1px;height:113px;background:#a8a8a8"></div>
<div class="a" style="left:420px;top:573px;width:1px;height:17px;background:#d8d8d8"></div>
<div class="a" style="left:464px;top:573px;width:1px;height:113px;background:#a8a8a8"></div>
<div class="a" style="left:464px;top:573px;width:1px;height:17px;background:#d8d8d8"></div>
<div class="a" style="left:504px;top:573px;width:1px;height:113px;background:#a8a8a8"></div>
<div class="a" style="left:504px;top:573px;width:1px;height:17px;background:#d8d8d8"></div>
<div class="a" style="left:830px;top:573px;width:1px;height:113px;background:#a8a8a8"></div>
<div class="a" style="left:830px;top:573px;width:1px;height:17px;background:#d8d8d8"></div>
<div class="a" style="left:878px;top:573px;width:1px;height:113px;background:#a8a8a8"></div>
<div class="a" style="left:878px;top:573px;width:1px;height:17px;background:#d8d8d8"></div>
<div class="a" style="left:933px;top:573px;width:1px;height:113px;background:#a8a8a8"></div>
<div class="a" style="left:933px;top:573px;width:1px;height:17px;background:#d8d8d8"></div>
<div class="a" style="left:986px;top:573px;width:1px;height:113px;background:#a8a8a8"></div>
<div class="a" style="left:986px;top:573px;width:1px;height:17px;background:#d8d8d8"></div>
<div class="a" style="left:1047px;top:573px;width:1px;height:113px;background:#a8a8a8"></div>
<div class="a" style="left:1047px;top:573px;width:1px;height:17px;background:#d8d8d8"></div>
<div class="a" style="left:1111px;top:573px;width:1px;height:113px;background:#a8a8a8"></div>
<div class="a" style="left:1111px;top:573px;width:1px;height:17px;background:#d8d8d8"></div>
<div class="a" style="left:1144px;top:573px;width:1px;height:113px;background:#a8a8a8"></div>
<div class="a" style="left:1144px;top:573px;width:1px;height:17px;background:#d8d8d8"></div>
<div class="a" style="left:1212px;top:573px;width:1px;height:113px;background:#a8a8a8"></div>
<div class="a" style="left:1212px;top:573px;width:1px;height:17px;background:#d8d8d8"></div>
<span class="t " style="left:389px;top:575px;">Pos</span>
<span class="t " style="left:425px;top:575px;">Rate</span>
<span class="t " style="left:469px;top:575px;">Grp</span>
<span class="t " style="left:509px;top:575px;">Beschreibung</span>
<span class="t " style="left:835px;top:575px;">genutzt</span>
<span class="t " style="left:883px;top:575px;">berechnet</span>
<span class="t " style="left:938px;top:575px;">Einheit</span>
<span class="t " style="left:991px;top:575px;">Netto</span>
<span class="t " style="left:1052px;top:575px;">Brutto</span>
<span class="t " style="left:1116px;top:575px;">%</span>
<span class="t " style="left:1149px;top:575px;">Gesamt</span>
<svg style="left:378px;top:596px" width="6" height="9"><path d="M0 0 5.500 4.500 0 9Z" fill="#111"/></svg>
<span class="t r r" style="right:1222.5px;top:592.7px;transform:scaleX(0.9);color:#000">1</span>
<span class="t " style="left:423px;top:592.7px;color:#fff">M</span>
<span class="t " style="left:467px;top:592.7px;color:#fff">A</span>
<span class="t " style="left:507px;top:592.7px;color:#fff">PKW-Monatstarif incl. km</span>
<span class="t r r" style="right:764.5px;top:592.7px;transform:scaleX(0.9);color:#fff">0,99</span>
<span class="t r r" style="right:709.5px;top:592.7px;transform:scaleX(0.9);color:#fff">1,00</span>
<span class="t " style="left:936px;top:592.7px;color:#fff">Monate</span>
<span class="t r r" style="right:595.5px;top:592.7px;transform:scaleX(0.9);color:#fff">750,00 €</span>
<span class="t r r" style="right:531.5px;top:592.7px;transform:scaleX(0.9);color:#fff">892,50 €</span>
<span class="t r r" style="right:430.5px;top:592.7px;transform:scaleX(0.9);color:#fff">750,00 €</span>
<span class="t r r" style="right:1222.5px;top:611.7px;transform:scaleX(0.9);color:#000">2</span>
<span class="t " style="left:423px;top:611.7px;color:#000">M</span>
<span class="t " style="left:467px;top:611.7px;color:#000">*</span>
<span class="t " style="left:507px;top:611.7px;color:#000">Winterreifengebühr</span>
<span class="t r r" style="right:764.5px;top:611.7px;transform:scaleX(0.9);color:#000">27,71</span>
<span class="t r r" style="right:709.5px;top:611.7px;transform:scaleX(0.9);color:#000">1,00</span>
<span class="t " style="left:936px;top:611.7px;color:#000">Tage</span>
<span class="t r r" style="right:595.5px;top:611.7px;transform:scaleX(0.9);color:#000">60,00 €</span>
<span class="t r r" style="right:531.5px;top:611.7px;transform:scaleX(0.9);color:#000">71,40 €</span>
<span class="t r r" style="right:430.5px;top:611.7px;transform:scaleX(0.9);color:#000">60,00 €</span>
<span class="t r r" style="right:1222.5px;top:630.7px;transform:scaleX(0.9);color:#000">99991</span>
<span class="t " style="left:423px;top:630.7px;color:#000">NS.</span>
<span class="t " style="left:507px;top:630.7px;color:#000">Nettosumme</span>
<span class="t r r" style="right:430.5px;top:630.7px;transform:scaleX(0.9);color:#000">810,00 €</span>
<span class="t r r" style="right:1222.5px;top:649.7px;transform:scaleX(0.9);color:#000">99992</span>
<span class="t " style="left:423px;top:649.7px;color:#000">MWST</span>
<span class="t " style="left:507px;top:649.7px;color:#000">Mehrwertsteuer 19 %</span>
<span class="t r r" style="right:595.5px;top:649.7px;transform:scaleX(0.9);color:#000">810,00 €</span>
<span class="t r r" style="right:498.5px;top:649.7px;transform:scaleX(0.9);color:#000">19,00</span>
<span class="t r r" style="right:430.5px;top:649.7px;transform:scaleX(0.9);color:#000">153,90 €</span>
<span class="t r r" style="right:1222.5px;top:668.7px;transform:scaleX(0.9);color:#000">99993</span>
<span class="t " style="left:423px;top:668.7px;color:#000">ES.</span>
<span class="t " style="left:507px;top:668.7px;color:#000">Endsumme</span>
<span class="t r r" style="right:430.5px;top:668.7px;transform:scaleX(0.9);color:#000">963,90 €</span>
<div class="a" style="left:1524px;top:573px;width:17px;height:274px;background:#fff;border-left:1px solid #c4c4c4"></div>
<div class="a" style="left:1524px;top:573px;width:17px;height:17px;background:#fff;border:1px solid #c4c4c4"></div>
<div class="a" style="left:1524px;top:830px;width:17px;height:17px;background:#fff;border:1px solid #c4c4c4"></div>
<svg style="left:1528px;top:577px" width="10" height="8"><path d="M1 6 5 1.500 9 6" fill="none" stroke="#444" stroke-width="1.500"/></svg>
<svg style="left:1528px;top:835px" width="10" height="8"><path d="M1 1.500 5 6 9 1.500" fill="none" stroke="#444" stroke-width="1.500"/></svg>
<div class="a" style="left:1525px;top:590px;width:16px;height:132px;background:#dcdcdc"></div>
<div class="a" style="left:1529px;top:653px;width:7px;height:1.4px;background:#555"></div>
<div class="a" style="left:1529px;top:656px;width:7px;height:1.4px;background:#555"></div>
<div class="a" style="left:1529px;top:659px;width:7px;height:1.4px;background:#555"></div>
<div class="a" style="left:376px;top:847px;width:1165px;height:19px;background:#f0f0f0"></div>
<div class="a" style="left:375px;top:848.5px;width:16px;height:16px;background:#dcdcdc;border:1px solid #8c8c8c"></div>
<svg style="left:375px;top:848.5px" width="16" height="16"><path d="M4 8H12M8 4V12" fill="none" stroke="#10a010" stroke-width="2.2"/></svg>
<div class="a" style="left:393px;top:848.5px;width:16px;height:16px;background:#dcdcdc;border:1px solid #8c8c8c"></div>
<svg style="left:393px;top:848.5px" width="16" height="16"><path d="M3.5 8H12.5" fill="none" stroke="#d01010" stroke-width="2"/></svg>
<div class="a" style="left:411px;top:848.5px;width:16px;height:16px;background:#f2f2f2;border:1px solid #c4c8cc"></div>
<svg style="left:411px;top:848.5px" width="16" height="16"><path d="M3.5 8 6.5 11 12.5 4.5" fill="none" stroke="#b4b4b4" stroke-width="2"/></svg>
<div class="a" style="left:429px;top:848.5px;width:16px;height:16px;background:#f2f2f2;border:1px solid #c4c8cc"></div>
<svg style="left:429px;top:848.5px" width="16" height="16"><path d="M3.5 3.5 12.5 12.5M12.5 3.5 3.5 12.5" fill="none" stroke="#b4b4b4" stroke-width="1.6"/></svg>
<div class="a" style="left:497px;top:847px;width:1027px;height:19px;background:#fff;border:1px solid #c4c4c4"></div>
<div class="a" style="left:497px;top:847px;width:19px;height:19px;background:#fff;border:1px solid #c4c4c4"></div>
<div class="a" style="left:1505px;top:847px;width:19px;height:19px;background:#fff;border:1px solid #c4c4c4"></div>
<svg style="left:502.5px;top:851.5px" width="8" height="10"><path d="M6 1 1.5 5 6 9" fill="none" stroke="#444" stroke-width="1.5"/></svg>
<svg style="left:1510.5px;top:851.5px" width="8" height="10"><path d="M2 1 6.5 5 2 9" fill="none" stroke="#444" stroke-width="1.5"/></svg>
</body></html>
